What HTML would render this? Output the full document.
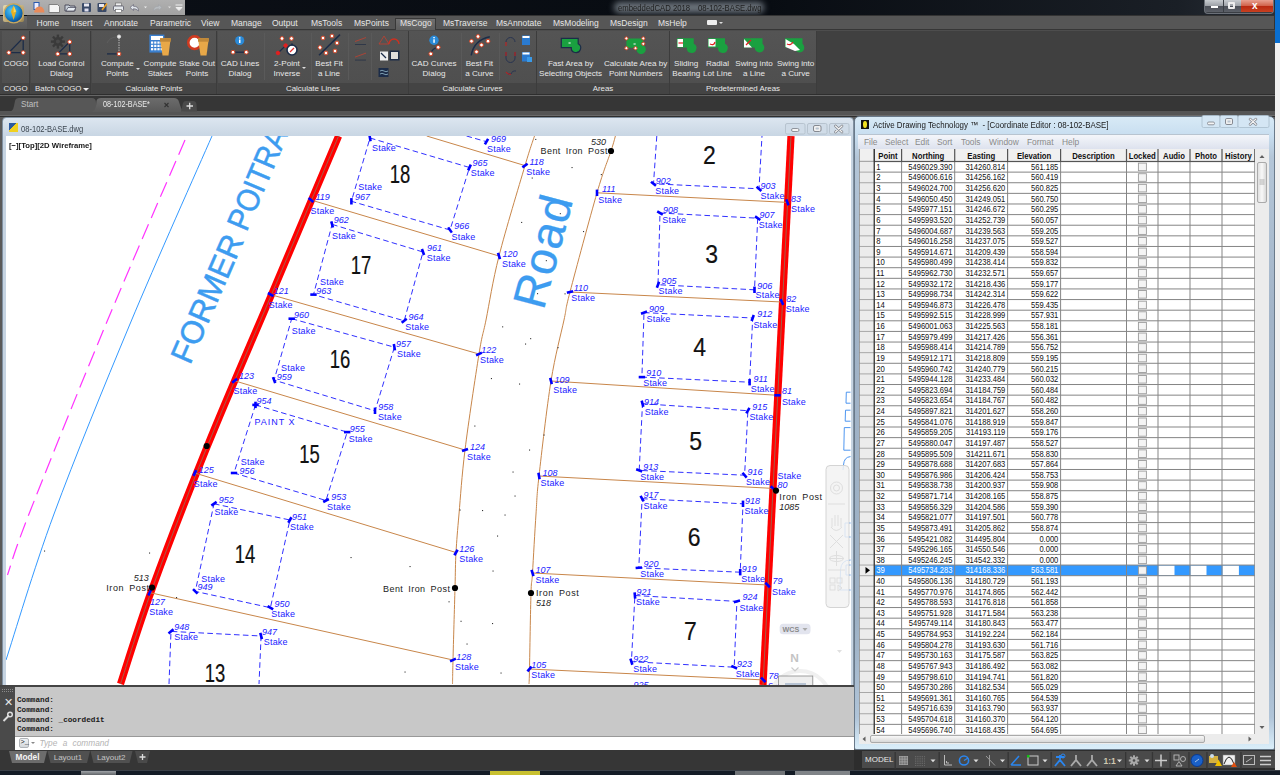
<!DOCTYPE html><html><head><meta charset="utf-8"><style>
*{margin:0;padding:0;box-sizing:border-box}
html,body{width:1280px;height:775px;overflow:hidden;background:#0a0e14;font-family:"Liberation Sans",sans-serif;position:relative}
.a{position:absolute}
.t{position:absolute;white-space:nowrap;line-height:1}
.tab{position:absolute;top:17px;height:12px;font-size:8.5px;color:#e6e6e6;line-height:12px;white-space:nowrap}
.lbl{position:absolute;font-size:8.1px;color:#e8e8e8;text-align:center;line-height:10px;white-space:nowrap}
.ptl{position:absolute;top:83px;height:11px;font-size:7.9px;color:#e8e8e8;text-align:center;line-height:11px;background:#444;white-space:nowrap}
.sep{position:absolute;top:33px;width:1px;height:48px;background:#3a3a3a;border-right:1px solid #555}

</style></head><body>
<div class="a" style="left:0;top:0;width:1280px;height:15px;background:linear-gradient(90deg,#0b0f16 0%,#080c12 60%,#1a1f26 92%,#2a3038 100%)"></div>
<div class="a" style="left:614px;top:2px;width:150px;height:11px;background:#6c747c;filter:blur(3px);border-radius:5px"></div>
<div class="t" style="left:618px;top:3.5px;font-size:8.3px;color:#1e1e1e;transform:scaleX(0.93);transform-origin:left">embeddedCAD 2018</div>
<div class="t" style="left:698px;top:3.5px;font-size:8.3px;color:#1e1e1e;transform:scaleX(0.93);transform-origin:left">08-102-BASE.dwg</div>
<div class="a" style="left:1204px;top:0;width:70px;height:14px;border:1px solid #6b7078;border-top:none;border-radius:0 0 4px 4px;background:#3a3e44"></div>
<div class="a" style="left:1205px;top:0;width:18px;height:12px;background:linear-gradient(#c8ccd0,#9ca0a6 50%,#4c5058 51%,#5c6068)"></div>
<div class="a" style="left:1211px;top:6px;width:7px;height:2px;background:#fff"></div>
<div class="a" style="left:1224px;top:0;width:17px;height:12px;background:linear-gradient(#c8ccd0,#9ca0a6 50%,#4c5058 51%,#5c6068)"></div>
<div class="a" style="left:1228px;top:2px;width:7px;height:7px;border:2px solid #eee;border-radius:1px"></div>
<div class="a" style="left:1241px;top:0;width:32px;height:12px;background:linear-gradient(#e8a090,#d06048 50%,#b82810 51%,#c84020)"></div>
<div class="t" style="left:1252px;top:1px;font-size:10px;font-weight:bold;color:#fff">x</div>
<div class="a" style="left:1275px;top:0;width:5px;height:43px;background:#0a6fd0"></div>
<div class="a" style="left:1275px;top:43px;width:5px;height:732px;background:#f0f0f0"></div>
<div class="a" style="left:0;top:0;width:185px;height:15px;background:linear-gradient(#b0b0b0,#a2a2a2)"></div>
<div class="a" style="left:0;top:16px;width:27px;height:11px;background:#6e6e6e"></div>
<svg class="a" style="left:0;top:0" width="190" height="16"><rect x="34" y="2.5" width="5" height="7" fill="#eef" stroke="#2a5ab0" stroke-width="1"/><path d="M34,12.5 Q35,6 40,6.5 Q44,7 44.5,12.5 Z" fill="#e88a5a"/><path d="M49,4.5 L57.5,4.5 L59.5,6.5 L59.5,12.5 L49,12.5 Z" fill="#f4f4f4" stroke="#777" stroke-width="0.9"/><path d="M65,5 L69,5 L70,6 L75,6 L75,11 L65,11 Z" fill="#c8d0d8" stroke="#445" stroke-width="0.9"/><path d="M66,11 L68,7.5 L76,7.5 L74,11 Z" fill="#e8eef4" stroke="#445" stroke-width="0.7"/><rect x="82" y="3" width="9" height="9" rx="1" fill="#3a4a68"/><rect x="84" y="3.5" width="5" height="3" fill="#e8e8f0"/><rect x="84.5" y="8.5" width="4" height="3" fill="#dde"/><rect x="97.5" y="3" width="9" height="9" rx="1" fill="#3a4a68"/><rect x="99" y="4" width="5" height="3" fill="#e8e8f0"/><path d="M102,10 L107,3.5" stroke="#f0a020" stroke-width="1.6"/><rect x="115.5" y="3" width="6" height="3" fill="#f0f0f0" stroke="#666" stroke-width="0.6"/><rect x="113.5" y="6" width="10" height="4.5" rx="1" fill="#e4e8ec" stroke="#556" stroke-width="0.8"/><rect x="115.5" y="9.5" width="6" height="3" fill="#fff" stroke="#666" stroke-width="0.6"/><path d="M130,7.5 L133.5,4.5 L133.5,6.3 Q138.5,6 138.5,11 Q136,8.5 133.5,8.7 L133.5,10.5 Z" fill="#dfe4ea" stroke="#667" stroke-width="0.7"/><path d="M144,6.5 L147,6.5 L145.5,8.2 Z" fill="#eee"/><path d="M162,7.5 L158.5,4.5 L158.5,6.3 Q153.5,6 153.5,11 Q156,8.5 158.5,8.7 L158.5,10.5 Z" fill="#b8bcc0" stroke="#a0a4a8" stroke-width="0.7"/><path d="M168,6.5 L171,6.5 L169.5,8.2 Z" fill="#ddd"/><path d="M175.5,5 L182.5,5 M176,7.5 L182,7.5 L179,10.5 Z" stroke="#eee" stroke-width="1" fill="#eee"/></svg>
<div class="a" style="left:0;top:16px;width:27px;height:13px;background:linear-gradient(#6a6a6a,#5a5a5a)"></div>
<svg class="a" style="left:0;top:0" width="30" height="30"><defs><radialGradient id="lg" cx="0.4" cy="0.35" r="0.7"><stop offset="0" stop-color="#58c8f4"/><stop offset="0.55" stop-color="#1a88d0"/><stop offset="1" stop-color="#0a3c80"/></radialGradient><linearGradient id="gg" x1="0" y1="0" x2="1" y2="1"><stop offset="0" stop-color="#e8dcb0"/><stop offset="1" stop-color="#9a8450"/></linearGradient></defs><rect x="3" y="5" width="21" height="17" rx="2" fill="url(#gg)"/><circle cx="13.7" cy="13.3" r="9.6" fill="url(#lg)" stroke="#c8a860" stroke-width="1.4"/><path d="M13.6,5.5 L16.2,11.5 L13.6,20 L11,11.5 Z" fill="#e8b020"/><path d="M13.6,5.5 L16.2,11.5 L13.6,12.5 Z" fill="#f8d860"/></svg>
<div class="a" style="left:27px;top:15px;width:1248px;height:15px;background:#333"></div>
<div class="a" style="left:27px;top:16px;width:1247px;height:13px;background:#565656"></div>
<div class="a" style="left:0;top:29px;width:1275px;height:1px;background:#363636"></div>
<div class="a" style="left:394.5px;top:18.3px;width:41px;height:12.5px;background:linear-gradient(#707070,#5c5c5c);border:1px solid #383838;border-bottom:none"></div>
<div class="tab" style="left:36.5px">Home</div>
<div class="tab" style="left:71px">Insert</div>
<div class="tab" style="left:104px">Annotate</div>
<div class="tab" style="left:150px">Parametric</div>
<div class="tab" style="left:201px">View</div>
<div class="tab" style="left:231px">Manage</div>
<div class="tab" style="left:272px">Output</div>
<div class="tab" style="left:311px">MsTools</div>
<div class="tab" style="left:354px">MsPoints</div>
<div class="tab" style="left:400px">MsCogo</div>
<div class="tab" style="left:443px">MsTraverse</div>
<div class="tab" style="left:496px">MsAnnotate</div>
<div class="tab" style="left:553px">MsModeling</div>
<div class="tab" style="left:610px">MsDesign</div>
<div class="tab" style="left:658px">MsHelp</div>
<div class="a" style="left:707px;top:20px;width:10px;height:5px;background:#eee;border-radius:1px"></div>
<div class="a" style="left:719px;top:22px;width:0;height:0;border-left:2px solid transparent;border-right:2px solid transparent;border-top:2px solid #ddd"></div>
<div class="a" style="left:0;top:30px;width:1275px;height:65px;background:linear-gradient(#4d4d4d,#454545)"></div>
<div class="a" style="left:0;top:94px;width:1275px;height:2px;background:#2a2a2a"></div>
<div class="a" style="left:2px;top:31px;width:28px;height:63px;background:linear-gradient(#545454,#4e4e4e);border-right:1px solid #3c3c3c"></div>
<div class="ptl" style="left:2px;width:27px">COGO</div>
<div class="a" style="left:31px;top:31px;width:60px;height:63px;background:linear-gradient(#545454,#4e4e4e);border-right:1px solid #3c3c3c"></div>
<div class="ptl" style="left:31px;width:59px;text-align:left;padding-left:4px">Batch COGO</div>
<div class="a" style="left:92px;top:31px;width:125px;height:63px;background:linear-gradient(#545454,#4e4e4e);border-right:1px solid #3c3c3c"></div>
<div class="ptl" style="left:92px;width:124px">Calculate Points</div>
<div class="a" style="left:218px;top:31px;width:191px;height:63px;background:linear-gradient(#545454,#4e4e4e);border-right:1px solid #3c3c3c"></div>
<div class="ptl" style="left:218px;width:190px">Calculate Lines</div>
<div class="a" style="left:409px;top:31px;width:128px;height:63px;background:linear-gradient(#545454,#4e4e4e);border-right:1px solid #3c3c3c"></div>
<div class="ptl" style="left:409px;width:127px">Calculate Curves</div>
<div class="a" style="left:537px;top:31px;width:133px;height:63px;background:linear-gradient(#545454,#4e4e4e);border-right:1px solid #3c3c3c"></div>
<div class="ptl" style="left:537px;width:132px">Areas</div>
<div class="a" style="left:670px;top:31px;width:147px;height:63px;background:linear-gradient(#545454,#4e4e4e);border-right:1px solid #3c3c3c"></div>
<div class="ptl" style="left:670px;width:146px">Predetermined Areas</div>
<div class="a" style="left:817px;top:31px;width:458px;height:63px;background:#404040"></div>
<div class="lbl" style="left:-24px;width:80px;top:58.6px">COGO</div>
<div class="lbl" style="left:21.4px;width:80px;top:58.6px">Load Control</div>
<div class="lbl" style="left:21.4px;width:80px;top:68.6px">Dialog</div>
<div class="lbl" style="left:77.4px;width:80px;top:58.6px">Compute</div>
<div class="lbl" style="left:77.4px;width:80px;top:68.6px">Points</div>
<div class="a" style="left:135.7px;top:67.6px;width:0;height:0;border-left:2px solid transparent;border-right:2px solid transparent;border-top:2.5px solid #ddd"></div>
<div class="lbl" style="left:120px;width:80px;top:58.6px">Compute</div>
<div class="lbl" style="left:120px;width:80px;top:68.6px">Stakes</div>
<div class="lbl" style="left:157.1px;width:80px;top:58.6px">Stake Out</div>
<div class="lbl" style="left:157.1px;width:80px;top:68.6px">Points</div>
<div class="lbl" style="left:200px;width:80px;top:58.6px">CAD Lines</div>
<div class="lbl" style="left:200px;width:80px;top:68.6px">Dialog</div>
<div class="lbl" style="left:246.89999999999998px;width:80px;top:58.6px">2-Point</div>
<div class="lbl" style="left:246.89999999999998px;width:80px;top:68.6px">Inverse</div>
<div class="a" style="left:301.7px;top:67px;width:0;height:0;border-left:2px solid transparent;border-right:2px solid transparent;border-top:2.5px solid #ddd"></div>
<div class="lbl" style="left:289px;width:80px;top:58.6px">Best Fit</div>
<div class="lbl" style="left:289px;width:80px;top:68.6px">a Line</div>
<div class="lbl" style="left:394px;width:80px;top:58.6px">CAD Curves</div>
<div class="lbl" style="left:394px;width:80px;top:68.6px">Dialog</div>
<div class="lbl" style="left:439.4px;width:80px;top:58.6px">Best Fit</div>
<div class="lbl" style="left:439.4px;width:80px;top:68.6px">a Curve</div>
<div class="lbl" style="left:530.6px;width:80px;top:58.6px">Fast Area by</div>
<div class="lbl" style="left:530.6px;width:80px;top:68.6px">Selecting Objects</div>
<div class="lbl" style="left:595.7px;width:80px;top:58.6px">Calculate Area by</div>
<div class="lbl" style="left:595.7px;width:80px;top:68.6px">Point Numbers</div>
<div class="lbl" style="left:646.2px;width:80px;top:58.6px">Sliding</div>
<div class="lbl" style="left:646.2px;width:80px;top:68.6px">Bearing</div>
<div class="lbl" style="left:677.5px;width:80px;top:58.6px">Radial</div>
<div class="lbl" style="left:677.5px;width:80px;top:68.6px">Lot Line</div>
<div class="lbl" style="left:714px;width:80px;top:58.6px">Swing into</div>
<div class="lbl" style="left:714px;width:80px;top:68.6px">a Line</div>
<div class="lbl" style="left:755.6px;width:80px;top:58.6px">Swing into</div>
<div class="lbl" style="left:755.6px;width:80px;top:68.6px">a Curve</div>
<div class="a" style="left:82.5px;top:87.5px;width:0;height:0;border-left:3px solid transparent;border-right:3px solid transparent;border-top:3px solid #eee"></div>
<div class="a" style="left:263.75px;top:33px;width:1px;height:47px;background:#5a5a5a"></div>
<div class="a" style="left:311px;top:33px;width:1px;height:47px;background:#5a5a5a"></div>
<div class="a" style="left:347.5px;top:33px;width:1px;height:47px;background:#5a5a5a"></div>
<div class="a" style="left:371.25px;top:33px;width:1px;height:47px;background:#5a5a5a"></div>
<div class="a" style="left:460.6px;top:33px;width:1px;height:47px;background:#5a5a5a"></div>
<div class="a" style="left:498.5px;top:33px;width:1px;height:47px;background:#5a5a5a"></div>
<svg class="a" style="left:0;top:0" width="830" height="96"><path d="M8.8,52.6 L23.2,52.6 L23.2,37.8 Z" fill="none" stroke="#1c2c48" stroke-width="1.3"/><circle cx="8.8" cy="52.6" r="1.9" fill="#fff" stroke="#d04020" stroke-width="1"/><circle cx="23.2" cy="52.6" r="1.9" fill="#fff" stroke="#d04020" stroke-width="1"/><circle cx="23.2" cy="37.8" r="1.9" fill="#fff" stroke="#d04020" stroke-width="1"/><g transform="translate(57.9 41.6)"><circle r="4.5" fill="#3a3a3a"/><circle r="2" fill="#4a4a4a"/><rect x="-1.2" y="-7" width="2.4" height="3" fill="#3a3a3a" transform="rotate(0)"/><rect x="-1.2" y="-7" width="2.4" height="3" fill="#3a3a3a" transform="rotate(45)"/><rect x="-1.2" y="-7" width="2.4" height="3" fill="#3a3a3a" transform="rotate(90)"/><rect x="-1.2" y="-7" width="2.4" height="3" fill="#3a3a3a" transform="rotate(135)"/><rect x="-1.2" y="-7" width="2.4" height="3" fill="#3a3a3a" transform="rotate(180)"/><rect x="-1.2" y="-7" width="2.4" height="3" fill="#3a3a3a" transform="rotate(225)"/><rect x="-1.2" y="-7" width="2.4" height="3" fill="#3a3a3a" transform="rotate(270)"/><rect x="-1.2" y="-7" width="2.4" height="3" fill="#3a3a3a" transform="rotate(315)"/></g><path d="M57.7,53.9 L69.7,53.9 L69.7,41.9 Z" fill="none" stroke="#1c2c48" stroke-width="1.3"/><circle cx="57.7" cy="53.9" r="1.9" fill="#fff" stroke="#d04020" stroke-width="1"/><circle cx="69.7" cy="53.9" r="1.9" fill="#fff" stroke="#d04020" stroke-width="1"/><circle cx="69.7" cy="41.9" r="1.9" fill="#fff" stroke="#d04020" stroke-width="1"/><path d="M119,37 L119,53" stroke="#bbb" stroke-width="1" stroke-dasharray="1.5 1"/><path d="M107,53.9 L119,53.9" stroke="#1c2c48" stroke-width="1.3"/><path d="M107,43 A11,11 0 0 1 116,37" fill="none" stroke="#666" stroke-width="0.6"/><circle cx="119" cy="36.6" r="1.6" fill="#eee" stroke="#ddd" stroke-width="1"/><circle cx="119" cy="53.9" r="1.9" fill="#fff" stroke="#d04020" stroke-width="1"/><rect x="149.4" y="34.6" width="15" height="18" fill="#3a80d0"/><rect x="151" y="36" width="12" height="4" fill="#fff"/><rect x="151.0" y="41.5" width="2.2" height="2.2" fill="#fff"/><rect x="151.0" y="44.8" width="2.2" height="2.2" fill="#fff"/><rect x="151.0" y="48.1" width="2.2" height="2.2" fill="#fff"/><rect x="154.2" y="41.5" width="2.2" height="2.2" fill="#fff"/><rect x="154.2" y="44.8" width="2.2" height="2.2" fill="#fff"/><rect x="154.2" y="48.1" width="2.2" height="2.2" fill="#fff"/><rect x="157.4" y="41.5" width="2.2" height="2.2" fill="#fff"/><rect x="157.4" y="44.8" width="2.2" height="2.2" fill="#fff"/><rect x="157.4" y="48.1" width="2.2" height="2.2" fill="#fff"/><rect x="160.6" y="41.5" width="2.2" height="2.2" fill="#fff"/><rect x="160.6" y="44.8" width="2.2" height="2.2" fill="#fff"/><rect x="160.6" y="48.1" width="2.2" height="2.2" fill="#fff"/><path d="M160,38.2 L170.7,38.2 L168.5,55.4 L162.5,55.4 Z" fill="#e8a848"/><rect x="160" y="38.2" width="10.7" height="3.5" fill="#c08838"/><circle cx="194.6" cy="42.7" r="6.3" fill="#fff" stroke="#d03a20" stroke-width="2.6"/><path d="M198,38.2 L208.8,38.2 L206.5,55.4 L200.5,55.4 Z" fill="#e8a848"/><rect x="198" y="38.2" width="10.8" height="3.5" fill="#c08838"/><circle cx="239.7" cy="40.5" r="4.6" fill="#2a8ad8"/><rect x="239" y="39.5" width="1.5" height="3.5" fill="#fff"/><rect x="239" y="37.3" width="1.5" height="1.3" fill="#fff"/><path d="M233,52.2 L246.3,52.2" stroke="#1c2c48" stroke-width="1.3"/><circle cx="233" cy="52.2" r="1.9" fill="#fff" stroke="#d04020" stroke-width="1"/><circle cx="246.3" cy="52.2" r="1.9" fill="#fff" stroke="#d04020" stroke-width="1"/><path d="M278,53 L285.6,45.6" stroke="#1c2c48" stroke-width="1.3"/><circle cx="282" cy="38.5" r="1.9" fill="#fff" stroke="#d04020" stroke-width="1"/><circle cx="291.5" cy="38.5" r="1.9" fill="#fff" stroke="#d04020" stroke-width="1"/><circle cx="278" cy="53" r="1.8" fill="#e02020" stroke="#e02020" stroke-width="1"/><circle cx="285.6" cy="45.6" r="1.8" fill="#e02020" stroke="#e02020" stroke-width="1"/><circle cx="292" cy="50" r="5" fill="#fff" stroke="#1c2c48" stroke-width="1.6"/><path d="M290,52 L294,48" stroke="#e03030" stroke-width="1.3"/><rect x="291" y="43.5" width="2" height="2" fill="#1c2c48"/><path d="M319,55.3 L340,34.6" stroke="#1c2c48" stroke-width="1.5"/><circle cx="323" cy="38" r="1.9" fill="#fff" stroke="#d04020" stroke-width="1"/><circle cx="332" cy="36" r="1.9" fill="#fff" stroke="#d04020" stroke-width="1"/><circle cx="337" cy="43" r="1.9" fill="#fff" stroke="#d04020" stroke-width="1"/><circle cx="320" cy="47.5" r="1.9" fill="#fff" stroke="#d04020" stroke-width="1"/><circle cx="326" cy="53" r="1.9" fill="#fff" stroke="#d04020" stroke-width="1"/><circle cx="335" cy="51" r="1.9" fill="#fff" stroke="#d04020" stroke-width="1"/><path d="M355,41.5 L366,37.5" stroke="#c04030" stroke-width="0.8"/><path d="M355,44.5 L366,44.5" stroke="#303848" stroke-width="1"/><path d="M355,57.1 L366,53.1" stroke="#c04030" stroke-width="0.8"/><path d="M355,60.1 L366,60.1" stroke="#303848" stroke-width="1"/><path d="M379,44 L384,36 L389,44 Z" fill="none" stroke="#c04030" stroke-width="0.8"/><path d="M389,44 A5,5 0 0 1 399,44" fill="none" stroke="#d03020" stroke-width="1.3"/><rect x="380" y="51.5" width="8" height="9" fill="#eee"/><path d="M381,53 L386,58" stroke="#1c2c48" stroke-width="1.2"/><rect x="389.5" y="50.5" width="10" height="10" fill="#1c2c48"/><rect x="391" y="52" width="7" height="7" fill="#ddd"/><rect x="378.5" y="68" width="10" height="9" fill="#1c2c48"/><path d="M380,71 q2,-1.5 4,0 t4,0 M380,74 q2,-1.5 4,0 t4,0" fill="none" stroke="#8ab" stroke-width="0.9"/><circle cx="434" cy="40.3" r="4.7" fill="#2a8ad8"/><rect x="433.3" y="39.3" width="1.5" height="3.5" fill="#fff"/><rect x="433.3" y="37" width="1.5" height="1.3" fill="#fff"/><path d="M430.8,53.8 Q432,48 438.2,47.3" fill="none" stroke="#1c2c48" stroke-width="1.3"/><circle cx="430.8" cy="53.8" r="1.9" fill="#fff" stroke="#d04020" stroke-width="1"/><circle cx="438.2" cy="47.3" r="1.9" fill="#fff" stroke="#d04020" stroke-width="1"/><path d="M471.2,55.4 Q474,40 489.8,36.8" fill="none" stroke="#1c2c48" stroke-width="1.5"/><circle cx="471.5" cy="41.2" r="1.9" fill="#fff" stroke="#d04020" stroke-width="1"/><circle cx="478" cy="36.5" r="1.9" fill="#fff" stroke="#d04020" stroke-width="1"/><circle cx="488" cy="41.2" r="1.9" fill="#fff" stroke="#d04020" stroke-width="1"/><circle cx="481.5" cy="45" r="1.9" fill="#fff" stroke="#d04020" stroke-width="1"/><circle cx="476.5" cy="51.8" r="1.9" fill="#fff" stroke="#d04020" stroke-width="1"/><path d="M506,42 A4.5,4.5 0 0 1 515,42 M506,52 L506,58 A4.5,4.5 0 0 0 515,58 L515,52 M506,72 A4.5,4.5 0 0 0 511,74 A4.5,4.5 0 0 1 516,71" fill="none" stroke="#283450" stroke-width="1"/><path d="M506,42 L506,46 M506,52 L506,56 M515,52 L515,56 M506,72 A4.5,4.5 0 0 0 511,74" fill="none" stroke="#c02020" stroke-width="1.1"/><rect x="522" y="35.5" width="8" height="9.5" fill="#2a7ad0"/><rect x="522.5" y="36" width="7" height="2" fill="#fff"/><rect x="522" y="52" width="8" height="9.5" fill="#2a7ad0"/><rect x="522.5" y="52.5" width="7" height="2" fill="#fff"/><rect x="527" y="57" width="5" height="5" fill="#3a9ae8"/><path d="M561.3,38.4 L578.2,38.4 L578.2,43.78 A4.7,4.7 0 1 1 571.27,47.7 L561.3,47.7 Z" fill="#1aa040" stroke="#1c2c48" stroke-width="1.2"/><rect x="568.5" y="42.5" width="2.2" height="1" fill="#fff"/><path d="M626.4,38.4 L643.3,38.4 L643.3,45.18 A4.7,4.7 0 1 1 636.77,47.7 L626.4,47.7 Z" fill="#1aa040" /><rect x="633.5" y="43.5" width="2.2" height="1" fill="#fff"/><circle cx="626.4" cy="38.4" r="1.6" fill="#fff" stroke="#d04020" stroke-width="1"/><circle cx="643.3" cy="38.4" r="1.6" fill="#fff" stroke="#d04020" stroke-width="1"/><circle cx="643.3" cy="43.8" r="1.6" fill="#fff" stroke="#d04020" stroke-width="1"/><circle cx="626.4" cy="48.2" r="1.6" fill="#fff" stroke="#d04020" stroke-width="1"/><circle cx="635.5" cy="48.2" r="1.6" fill="#fff" stroke="#d04020" stroke-width="1"/><path d="M676.9,38.25 L693.75,38.25 L693.75,43.87 A4.8,4.8 0 1 1 686.93,47.4 L676.9,47.4 Z" fill="#1aa040" /><path d="M708,38.25 L725,38.25 L725,43.87 A4.8,4.8 0 1 1 718.18,47.4 L708,47.4 Z" fill="#1aa040" /><path d="M743.75,38.25 L762.5,38.25 L762.5,43.87 A4.8,4.8 0 1 1 754.68,47.4 L743.75,47.4 Z" fill="#1aa040" /><path d="M785,38.25 L802.5,38.25 L802.5,43.87 A4.8,4.8 0 1 1 794.68,47.4 L785,47.4 Z" fill="#1aa040" /><rect x="677.5" y="39" width="5.5" height="8" fill="#fff"/><path d="M678.5,43 L683,43" stroke="#e02020" stroke-width="1.2"/><rect x="708.5" y="39" width="7" height="7.5" fill="#fff"/><path d="M710,44 Q714,46 715,42" fill="none" stroke="#e02020" stroke-width="1.2"/><path d="M744,39 L752,47.5 L744,47.5 Z" fill="#fff"/><path d="M746,45 L751,40" stroke="#e02020" stroke-width="1.3"/><path d="M785.5,39 L794,44 L800,50 L795,51 L785.5,47 Z" fill="#fff"/><path d="M787,44 Q791,46 793,42" fill="none" stroke="#e02020" stroke-width="1.2"/></svg>
<div class="a" style="left:0;top:94px;width:1275px;height:1px;background:#2e2e2e"></div>
<div class="a" style="left:0;top:95px;width:1275px;height:1px;background:#666"></div>
<div class="a" style="left:0;top:96px;width:1275px;height:20px;background:#363636"></div>
<div class="a" style="left:0;top:111px;width:1275px;height:3.5px;background:#555"></div>
<div class="a" style="left:0;top:114.5px;width:1275px;height:1px;background:#6a6a6a"></div>
<div class="a" style="left:0;top:115.5px;width:1275px;height:1.5px;background:#2e2e2e"></div>
<svg class="a" style="left:0;top:0" width="200" height="116"><defs><linearGradient id="gA" x1="0" y1="0" x2="0" y2="1"><stop offset="0" stop-color="#6c6c6c"/><stop offset="1" stop-color="#595959"/></linearGradient></defs><path d="M8,112 Q13,112 14,106 L15,101 Q15.5,98 19,98 L92,98 Q96,98 96,103 L96,108 Q96,111 99,112 Z" fill="#575757"/><path d="M90,112 Q95,112 96,106 L96.5,101 Q97,98 101,98 L174,98 Q178,98 179,102 L181,108 Q182,111 186,112 Z" fill="url(#gA)"/><path d="M181,111.5 L183,103 Q183.5,101 186,101 L193,101 Q196,101 196.5,104 L197,111.5 Z" fill="#4a4a4a"/><path d="M186.5,106 L193,106 M189.7,102.8 L189.7,109.2" stroke="#ddd" stroke-width="1.3"/><path d="M164.5,103 L168.5,107 M168.5,103 L164.5,107" stroke="#333" stroke-width="1.1"/></svg>
<div class="t" style="left:21px;top:101px;font-size:8.2px;color:#c0c0c0">Start</div>
<div class="t" style="left:103px;top:101px;font-size:8.2px;color:#eaeaea;transform:scaleX(0.88);transform-origin:left">08-102-BASE*</div>
<div class="a" style="left:0;top:117px;width:1275px;height:653px;background:#5a5a5a"></div>
<div class="a" style="left:2px;top:117px;width:852px;height:570px;background:linear-gradient(#dce6f0,#c6d4e2 20px,#c6d4e2);border:1px solid #8090a0;border-radius:4px 4px 0 0"></div>
<div class="t" style="left:21px;top:124.8px;font-size:8.8px;color:#3c4650;transform:scaleX(0.86);transform-origin:left">08-102-BASE.dwg</div>
<div class="a" style="left:9px;top:123px;width:9px;height:9px;background:linear-gradient(135deg,#2c5aa0 40%,#f0d020 41%)"></div>
<svg class="a" style="left:0;top:0" width="860" height="140"><rect x="785.5" y="123.5" width="19.5" height="10.5" rx="1.5" fill="#d0dce8" stroke="#b0bcc8" stroke-width="0.8"/><rect x="807.5" y="123.5" width="19.5" height="10.5" rx="1.5" fill="#d0dce8" stroke="#b0bcc8" stroke-width="0.8"/><rect x="829.5" y="123.5" width="19.5" height="10.5" rx="1.5" fill="#d0dce8" stroke="#b0bcc8" stroke-width="0.8"/><rect x="791.5" y="128.5" width="7.5" height="3" rx="1.5" fill="#f4f4f4" stroke="#7a7e86" stroke-width="0.8"/><rect x="813.5" y="125.5" width="7.5" height="6" rx="1.5" fill="#f0f0f0" stroke="#7a7e86" stroke-width="0.9"/><rect x="815.5" y="127.5" width="3.5" height="2" rx="1" fill="#b8c4d0"/><path d="M835.5,126 L842,132 M842,126 L835.5,132" stroke="#7a7e86" stroke-width="2.6" stroke-linecap="round"/><path d="M835.5,126 L842,132 M842,126 L835.5,132" stroke="#f4f4f4" stroke-width="1.3" stroke-linecap="round"/></svg>
<div class="a" style="left:6px;top:136px;width:845px;height:549px;background:#fff;overflow:hidden" id="dw">
<svg width="845" height="549" viewBox="6 136 845 549" style="position:absolute;left:0;top:0">
<path d="M338.6,136.0 C327.4,162.4 293.4,242.9 271.5,294.6 C249.6,346.3 227.2,397.2 207.4,446.0 C187.6,494.8 167.1,547.8 152.6,587.5 C138.1,627.2 125.8,667.9 120.5,684.0" fill="none" stroke="#ff0000" stroke-width="7.2"/>
<path d="M338.6,136.0 C327.4,162.4 293.4,242.9 271.5,294.6 C249.6,346.3 227.2,397.2 207.4,446.0 C187.6,494.8 167.1,547.8 152.6,587.5 C138.1,627.2 125.8,667.9 120.5,684.0" fill="none" stroke="#9a6a50" stroke-width="0.9"/>
<path d="M791.0,136.0 L763.0,685.0" fill="none" stroke="#ff0000" stroke-width="7.2"/>
<path d="M791.0,136.0 L763.0,685.0" fill="none" stroke="#9a6a50" stroke-width="0.9"/>
<path d="M212.0,136.0 C198.3,167.3 156.3,261.0 130.0,324.0 C103.7,387.0 74.7,458.0 54.0,514.0 C33.3,570.0 14.0,635.7 6.0,660.0" fill="none" stroke="#3399ff" stroke-width="1"/>
<path d="M185.0,140.0 C171.8,170.7 132.0,261.7 106.0,324.0 C80.0,386.3 45.4,472.2 29.0,514.0 C12.6,555.8 11.1,564.8 7.5,575.0" fill="none" stroke="#ff33ff" stroke-width="1.2" stroke-dasharray="16 7"/>
<path d="M534.5,136.0 C532.9,140.9 530.9,145.6 525.0,165.6 C519.1,185.6 505.5,230.3 499.0,256.0 C492.5,281.7 489.3,303.7 486.0,320.0 C482.7,336.3 482.5,332.3 479.0,354.0 C475.5,375.7 468.3,423.3 465.0,450.0 C461.7,476.7 460.5,496.9 459.0,514.0 C457.5,531.1 456.7,540.2 456.0,552.5 C455.3,564.8 455.5,570.1 455.0,588.0 C454.5,605.9 453.4,644.0 453.0,660.0 C452.6,676.0 452.6,680.0 452.5,684.0" fill="none" stroke="#c8864a" stroke-width="1"/>
<path d="M615.4,136.0 C614.7,138.5 614.1,141.5 611.0,151.0 C607.9,160.5 603.8,169.3 597.0,192.8 C590.2,216.3 575.5,270.8 570.0,292.0 C564.5,313.2 567.2,305.2 564.0,320.0 C560.8,334.8 555.2,355.0 551.0,381.0 C546.8,407.0 541.5,453.8 539.0,476.0 C536.5,498.2 537.1,497.8 536.0,514.0 C534.9,530.2 533.3,559.8 532.5,573.0 C531.7,586.2 531.5,577.0 531.0,593.0 C530.5,609.0 529.8,653.8 529.5,669.0 C529.2,684.2 529.1,681.5 529.0,684.0" fill="none" stroke="#c8864a" stroke-width="1"/>
<path d="M426.7,136.0 L525.0,165.6" stroke="#c8864a" stroke-width="1"/>
<path d="M311.0,200.0 L499.0,256.0" stroke="#c8864a" stroke-width="1"/>
<path d="M270.7,294.6 L479.0,354.0" stroke="#c8864a" stroke-width="1"/>
<path d="M234.6,380.8 L465.0,450.0" stroke="#c8864a" stroke-width="1"/>
<path d="M194.8,473.0 L456.0,552.5" stroke="#c8864a" stroke-width="1"/>
<path d="M149.7,592.6 L453.0,660.0" stroke="#c8864a" stroke-width="1"/>
<path d="M597.0,192.8 L787.4,202.4" stroke="#c8864a" stroke-width="1"/>
<path d="M570.0,292.0 L781.9,302.0" stroke="#c8864a" stroke-width="1"/>
<path d="M551.0,381.0 L777.5,395.3" stroke="#c8864a" stroke-width="1"/>
<path d="M539.0,476.0 L773.1,488.4" stroke="#c8864a" stroke-width="1"/>
<path d="M532.5,573.0 L767.6,585.0" stroke="#c8864a" stroke-width="1"/>
<path d="M529.5,669.0 L763.3,679.9" stroke="#c8864a" stroke-width="1"/>
<path d="M466.5,136.0 L486.5,141.7" fill="none" stroke="#3030ff" stroke-width="1" stroke-dasharray="5.6 3.3"/>
<path d="M370.0,138.0 L469.5,167.5 L450.0,230.0 L351.4,201.3 L370.0,138.0" fill="none" stroke="#3030ff" stroke-width="1" stroke-dasharray="5.6 3.3"/>
<path d="M332.1,224.4 L423.0,252.0 L404.2,320.8 L313.5,294.6 L332.1,224.4" fill="none" stroke="#3030ff" stroke-width="1" stroke-dasharray="5.6 3.3"/>
<path d="M291.7,318.7 L394.4,347.2 L375.0,410.8 L274.1,380.1 L291.7,318.7" fill="none" stroke="#3030ff" stroke-width="1" stroke-dasharray="5.6 3.3"/>
<path d="M255.5,404.9 L347.2,432.1 L326.0,500.5 L234.0,473.0 L255.5,404.9" fill="none" stroke="#3030ff" stroke-width="1" stroke-dasharray="5.6 3.3"/>
<path d="M214.0,503.8 L289.9,520.0 L270.4,607.7 L195.3,591.4 L214.0,503.8" fill="none" stroke="#3030ff" stroke-width="1" stroke-dasharray="5.6 3.3"/>
<path d="M169.0,684.0 L171.0,631.4 L261.1,636.0 L259.0,684.0" fill="none" stroke="#3030ff" stroke-width="1" stroke-dasharray="5.6 3.3"/>
<path d="M656.8,136.0 L653.5,183.8 L759.0,188.8 L762.0,136.0" fill="none" stroke="#3030ff" stroke-width="1" stroke-dasharray="5.6 3.3"/>
<path d="M660.0,213.0 L757.7,218.2 L754.5,289.8 L658.0,284.7 L660.0,213.0" fill="none" stroke="#3030ff" stroke-width="1" stroke-dasharray="5.6 3.3"/>
<path d="M644.0,312.6 L752.7,318.0 L749.6,382.2 L641.9,377.1 L644.0,312.6" fill="none" stroke="#3030ff" stroke-width="1" stroke-dasharray="5.6 3.3"/>
<path d="M642.5,403.7 L747.9,410.7 L744.6,475.2 L639.2,470.4 L642.5,403.7" fill="none" stroke="#3030ff" stroke-width="1" stroke-dasharray="5.6 3.3"/>
<path d="M642.1,498.7 L743.0,503.8 L740.2,572.2 L638.8,567.8 L642.1,498.7" fill="none" stroke="#3030ff" stroke-width="1" stroke-dasharray="5.6 3.3"/>
<path d="M634.9,595.5 L736.9,601.4 L734.2,667.2 L631.4,661.7 L634.9,595.5" fill="none" stroke="#3030ff" stroke-width="1" stroke-dasharray="5.6 3.3"/>
<rect x="523.7" y="162.4" width="2.6" height="6.4" fill="#0000ff" transform="rotate(-125 525 165.6)"/>
<rect x="309.7" y="196.8" width="2.6" height="6.4" fill="#0000ff" transform="rotate(-50 311 200)"/>
<rect x="497.7" y="252.8" width="2.6" height="6.4" fill="#0000ff" transform="rotate(-18 499 256)"/>
<rect x="269.4" y="291.40000000000003" width="2.6" height="6.4" fill="#0000ff" transform="rotate(-60 270.7 294.6)"/>
<rect x="477.7" y="350.8" width="2.6" height="6.4" fill="#0000ff" transform="rotate(-115 479 354)"/>
<rect x="233.29999999999998" y="377.6" width="2.6" height="6.4" fill="#0000ff" transform="rotate(-130 234.6 380.8)"/>
<rect x="463.7" y="446.8" width="2.6" height="6.4" fill="#0000ff" transform="rotate(-110 465 450)"/>
<rect x="193.5" y="469.8" width="2.6" height="6.4" fill="#0000ff" transform="rotate(-155 194.8 473)"/>
<rect x="454.7" y="549.3" width="2.6" height="6.4" fill="#0000ff" transform="rotate(-150 456 552.5)"/>
<rect x="148.39999999999998" y="589.4" width="2.6" height="6.4" fill="#0000ff" transform="rotate(-155 149.7 592.6)"/>
<rect x="451.7" y="656.8" width="2.6" height="6.4" fill="#0000ff" transform="rotate(-115 453 660)"/>
<rect x="595.7" y="189.60000000000002" width="2.6" height="6.4" fill="#0000ff" transform="rotate(0 597 192.8)"/>
<rect x="568.7" y="288.8" width="2.6" height="6.4" fill="#0000ff" transform="rotate(-105 570 292)"/>
<rect x="549.7" y="377.8" width="2.6" height="6.4" fill="#0000ff" transform="rotate(-15 551 381)"/>
<rect x="537.7" y="472.8" width="2.6" height="6.4" fill="#0000ff" transform="rotate(-10 539 476)"/>
<rect x="531.2" y="569.8" width="2.6" height="6.4" fill="#0000ff" transform="rotate(-18 532.5 573)"/>
<rect x="528.2" y="665.8" width="2.6" height="6.4" fill="#0000ff" transform="rotate(-140 529.5 669)"/>
<rect x="786.1" y="199.20000000000002" width="2.6" height="6.4" fill="#0000ff" transform="rotate(-20 787.4 202.4)"/>
<rect x="780.6" y="298.8" width="2.6" height="6.4" fill="#0000ff" transform="rotate(-25 781.9 302)"/>
<rect x="776.2" y="392.1" width="2.6" height="6.4" fill="#0000ff" transform="rotate(-90 777.5 395.3)"/>
<rect x="771.8000000000001" y="485.2" width="2.6" height="6.4" fill="#0000ff" transform="rotate(-50 773.1 488.4)"/>
<rect x="766.3000000000001" y="581.8" width="2.6" height="6.4" fill="#0000ff" transform="rotate(-45 767.6 585)"/>
<rect x="762.0" y="676.6999999999999" width="2.6" height="6.4" fill="#0000ff" transform="rotate(-45 763.3 679.9)"/>
<rect x="485.2" y="138.5" width="2.6" height="6.4" fill="#0000ff" transform="rotate(-150 486.5 141.7)"/>
<rect x="468.2" y="164.3" width="2.6" height="6.4" fill="#0000ff" transform="rotate(-155 469.5 167.5)"/>
<rect x="448.7" y="226.8" width="2.6" height="6.4" fill="#0000ff" transform="rotate(-35 450 230)"/>
<rect x="350.09999999999997" y="198.10000000000002" width="2.6" height="6.4" fill="#0000ff" transform="rotate(0 351.4 201.3)"/>
<rect x="368.7" y="134.8" width="2.6" height="6.4" fill="#0000ff" transform="rotate(-10 370 138)"/>
<rect x="330.8" y="221.20000000000002" width="2.6" height="6.4" fill="#0000ff" transform="rotate(-15 332.1 224.4)"/>
<rect x="421.7" y="248.8" width="2.6" height="6.4" fill="#0000ff" transform="rotate(-20 423 252)"/>
<rect x="402.9" y="317.6" width="2.6" height="6.4" fill="#0000ff" transform="rotate(-128 404.2 320.8)"/>
<rect x="312.2" y="291.40000000000003" width="2.6" height="6.4" fill="#0000ff" transform="rotate(-90 313.5 294.6)"/>
<rect x="290.4" y="315.5" width="2.6" height="6.4" fill="#0000ff" transform="rotate(-90 291.7 318.7)"/>
<rect x="393.09999999999997" y="344.0" width="2.6" height="6.4" fill="#0000ff" transform="rotate(-10 394.4 347.2)"/>
<rect x="373.7" y="407.6" width="2.6" height="6.4" fill="#0000ff" transform="rotate(0 375 410.8)"/>
<rect x="272.8" y="376.90000000000003" width="2.6" height="6.4" fill="#0000ff" transform="rotate(-20 274.1 380.1)"/>
<rect x="254.2" y="401.7" width="2.6" height="6.4" fill="#0000ff" transform="rotate(-90 255.5 404.9)"/>
<rect x="345.9" y="428.90000000000003" width="2.6" height="6.4" fill="#0000ff" transform="rotate(-90 347.2 432.1)"/>
<rect x="324.7" y="497.3" width="2.6" height="6.4" fill="#0000ff" transform="rotate(-118 326 500.5)"/>
<rect x="232.7" y="469.8" width="2.6" height="6.4" fill="#0000ff" transform="rotate(-90 234 473)"/>
<rect x="212.7" y="500.55" width="2.6" height="6.4" fill="#0000ff" transform="rotate(-125 214 503.75)"/>
<rect x="288.59999999999997" y="516.8" width="2.6" height="6.4" fill="#0000ff" transform="rotate(-150 289.9 520)"/>
<rect x="269.09999999999997" y="604.5" width="2.6" height="6.4" fill="#0000ff" transform="rotate(-60 270.4 607.7)"/>
<rect x="194.0" y="588.1999999999999" width="2.6" height="6.4" fill="#0000ff" transform="rotate(-45 195.3 591.4)"/>
<rect x="169.7" y="628.1999999999999" width="2.6" height="6.4" fill="#0000ff" transform="rotate(-130 171 631.4)"/>
<rect x="259.8" y="632.8" width="2.6" height="6.4" fill="#0000ff" transform="rotate(-15 261.1 636)"/>
<rect x="652.2" y="180.60000000000002" width="2.6" height="6.4" fill="#0000ff" transform="rotate(-50 653.5 183.8)"/>
<rect x="757.7" y="185.60000000000002" width="2.6" height="6.4" fill="#0000ff" transform="rotate(-48 759 188.8)"/>
<rect x="658.7" y="209.8" width="2.6" height="6.4" fill="#0000ff" transform="rotate(-60 660 213)"/>
<rect x="756.4000000000001" y="215.0" width="2.6" height="6.4" fill="#0000ff" transform="rotate(-55 757.7 218.2)"/>
<rect x="753.2" y="286.6" width="2.6" height="6.4" fill="#0000ff" transform="rotate(0 754.5 289.8)"/>
<rect x="656.7" y="281.5" width="2.6" height="6.4" fill="#0000ff" transform="rotate(-160 658 284.7)"/>
<rect x="642.7" y="309.40000000000003" width="2.6" height="6.4" fill="#0000ff" transform="rotate(-110 644 312.6)"/>
<rect x="751.4000000000001" y="314.8" width="2.6" height="6.4" fill="#0000ff" transform="rotate(-160 752.7 318)"/>
<rect x="748.3000000000001" y="379.0" width="2.6" height="6.4" fill="#0000ff" transform="rotate(0 749.6 382.2)"/>
<rect x="640.6" y="373.90000000000003" width="2.6" height="6.4" fill="#0000ff" transform="rotate(-90 641.9 377.1)"/>
<rect x="641.2" y="400.5" width="2.6" height="6.4" fill="#0000ff" transform="rotate(-15 642.5 403.7)"/>
<rect x="746.6" y="407.5" width="2.6" height="6.4" fill="#0000ff" transform="rotate(-150 747.9 410.7)"/>
<rect x="743.3000000000001" y="472.0" width="2.6" height="6.4" fill="#0000ff" transform="rotate(-40 744.6 475.2)"/>
<rect x="637.9000000000001" y="467.2" width="2.6" height="6.4" fill="#0000ff" transform="rotate(-70 639.2 470.4)"/>
<rect x="640.8000000000001" y="495.5" width="2.6" height="6.4" fill="#0000ff" transform="rotate(-30 642.1 498.7)"/>
<rect x="741.7" y="500.6" width="2.6" height="6.4" fill="#0000ff" transform="rotate(0 743 503.8)"/>
<rect x="738.9000000000001" y="569.0" width="2.6" height="6.4" fill="#0000ff" transform="rotate(0 740.2 572.2)"/>
<rect x="637.5" y="564.5999999999999" width="2.6" height="6.4" fill="#0000ff" transform="rotate(-95 638.8 567.8)"/>
<rect x="633.6" y="592.3" width="2.6" height="6.4" fill="#0000ff" transform="rotate(-5 634.9 595.5)"/>
<rect x="735.6" y="598.1999999999999" width="2.6" height="6.4" fill="#0000ff" transform="rotate(-105 736.9 601.4)"/>
<rect x="732.9000000000001" y="664.0" width="2.6" height="6.4" fill="#0000ff" transform="rotate(-65 734.2 667.2)"/>
<rect x="630.1" y="658.5" width="2.6" height="6.4" fill="#0000ff" transform="rotate(-18 631.4 661.7)"/>
<rect x="254.2" y="401.7" width="2.6" height="6.4" fill="#0000ff"/>
<text x="491" y="141.8" font-family="Liberation Sans" font-size="9" fill="#2222ff" font-style="italic">969</text>
<text x="487" y="151.8" font-family="Liberation Sans" font-size="9" fill="#2222ff" letter-spacing="0.2">Stake</text>
<text x="472.5" y="165.8" font-family="Liberation Sans" font-size="9" fill="#2222ff" font-style="italic">965</text>
<text x="470.75" y="176.3" font-family="Liberation Sans" font-size="9" fill="#2222ff" letter-spacing="0.2">Stake</text>
<text x="529.5" y="165.05" font-family="Liberation Sans" font-size="9" fill="#2222ff" font-style="italic">118</text>
<text x="526.25" y="175.05" font-family="Liberation Sans" font-size="9" fill="#2222ff" letter-spacing="0.2">Stake</text>
<text x="315.5" y="199.55" font-family="Liberation Sans" font-size="9" fill="#2222ff" font-style="italic">119</text>
<text x="310.5" y="214.05" font-family="Liberation Sans" font-size="9" fill="#2222ff" letter-spacing="0.2">Stake</text>
<text x="355" y="199.55" font-family="Liberation Sans" font-size="9" fill="#2222ff" font-style="italic">967</text>
<text x="358.25" y="190.3" font-family="Liberation Sans" font-size="9" fill="#2222ff" letter-spacing="0.2">Stake</text>
<text x="454.25" y="229.05" font-family="Liberation Sans" font-size="9" fill="#2222ff" font-style="italic">966</text>
<text x="451.5" y="239.55" font-family="Liberation Sans" font-size="9" fill="#2222ff" letter-spacing="0.2">Stake</text>
<text x="333.75" y="223.3" font-family="Liberation Sans" font-size="9" fill="#2222ff" font-style="italic">962</text>
<text x="332" y="238.8" font-family="Liberation Sans" font-size="9" fill="#2222ff" letter-spacing="0.2">Stake</text>
<text x="427" y="250.8" font-family="Liberation Sans" font-size="9" fill="#2222ff" font-style="italic">961</text>
<text x="426.75" y="261.3" font-family="Liberation Sans" font-size="9" fill="#2222ff" letter-spacing="0.2">Stake</text>
<text x="502.5" y="256.55" font-family="Liberation Sans" font-size="9" fill="#2222ff" font-style="italic">120</text>
<text x="502" y="267.05" font-family="Liberation Sans" font-size="9" fill="#2222ff" letter-spacing="0.2">Stake</text>
<text x="316.25" y="293.8" font-family="Liberation Sans" font-size="9" fill="#2222ff" font-style="italic">963</text>
<text x="320" y="285.05" font-family="Liberation Sans" font-size="9" fill="#2222ff" letter-spacing="0.2">Stake</text>
<text x="408.6" y="319.8" font-family="Liberation Sans" font-size="9" fill="#2222ff" font-style="italic">964</text>
<text x="405.3" y="330.1" font-family="Liberation Sans" font-size="9" fill="#2222ff" letter-spacing="0.2">Stake</text>
<text x="573.75" y="290.8" font-family="Liberation Sans" font-size="9" fill="#2222ff" font-style="italic">110</text>
<text x="571.25" y="300.8" font-family="Liberation Sans" font-size="9" fill="#2222ff" letter-spacing="0.2">Stake</text>
<text x="601.9" y="192.10000000000002" font-family="Liberation Sans" font-size="9" fill="#2222ff" font-style="italic">111</text>
<text x="598.2" y="202.9" font-family="Liberation Sans" font-size="9" fill="#2222ff" letter-spacing="0.2">Stake</text>
<text x="273.75" y="293.8" font-family="Liberation Sans" font-size="9" fill="#2222ff" font-style="italic">121</text>
<text x="268.75" y="307.55" font-family="Liberation Sans" font-size="9" fill="#2222ff" letter-spacing="0.2">Stake</text>
<text x="293.9" y="318.2" font-family="Liberation Sans" font-size="9" fill="#2222ff" font-style="italic">960</text>
<text x="291.7" y="333.6" font-family="Liberation Sans" font-size="9" fill="#2222ff" letter-spacing="0.2">Stake</text>
<text x="395.9" y="346.7" font-family="Liberation Sans" font-size="9" fill="#2222ff" font-style="italic">957</text>
<text x="397" y="357.1" font-family="Liberation Sans" font-size="9" fill="#2222ff" letter-spacing="0.2">Stake</text>
<text x="276.7" y="379.7" font-family="Liberation Sans" font-size="9" fill="#2222ff" font-style="italic">959</text>
<text x="281.1" y="370.90000000000003" font-family="Liberation Sans" font-size="9" fill="#2222ff" letter-spacing="0.2">Stake</text>
<text x="239" y="379.40000000000003" font-family="Liberation Sans" font-size="9" fill="#2222ff" font-style="italic">123</text>
<text x="233.5" y="393.90000000000003" font-family="Liberation Sans" font-size="9" fill="#2222ff" letter-spacing="0.2">Stake</text>
<text x="256.6" y="404.2" font-family="Liberation Sans" font-size="9" fill="#2222ff" font-style="italic">954</text>
<text x="378.3" y="410.2" font-family="Liberation Sans" font-size="9" fill="#2222ff" font-style="italic">958</text>
<text x="377.9" y="420.3" font-family="Liberation Sans" font-size="9" fill="#2222ff" letter-spacing="0.2">Stake</text>
<text x="349.8" y="431.7" font-family="Liberation Sans" font-size="9" fill="#2222ff" font-style="italic">955</text>
<text x="348.7" y="442.0" font-family="Liberation Sans" font-size="9" fill="#2222ff" letter-spacing="0.2">Stake</text>
<text x="239.5" y="473.8" font-family="Liberation Sans" font-size="9" fill="#2222ff" font-style="italic">956</text>
<text x="240.75" y="465.3" font-family="Liberation Sans" font-size="9" fill="#2222ff" letter-spacing="0.2">Stake</text>
<text x="198.75" y="472.8" font-family="Liberation Sans" font-size="9" fill="#2222ff" font-style="italic">125</text>
<text x="193.75" y="487.05" font-family="Liberation Sans" font-size="9" fill="#2222ff" letter-spacing="0.2">Stake</text>
<text x="218.75" y="502.8" font-family="Liberation Sans" font-size="9" fill="#2222ff" font-style="italic">952</text>
<text x="214.5" y="514.55" font-family="Liberation Sans" font-size="9" fill="#2222ff" letter-spacing="0.2">Stake</text>
<text x="292" y="519.55" font-family="Liberation Sans" font-size="9" fill="#2222ff" font-style="italic">951</text>
<text x="290" y="529.55" font-family="Liberation Sans" font-size="9" fill="#2222ff" letter-spacing="0.2">Stake</text>
<text x="197.5" y="590.05" font-family="Liberation Sans" font-size="9" fill="#2222ff" font-style="italic">949</text>
<text x="201.25" y="581.55" font-family="Liberation Sans" font-size="9" fill="#2222ff" letter-spacing="0.2">Stake</text>
<text x="274.5" y="606.55" font-family="Liberation Sans" font-size="9" fill="#2222ff" font-style="italic">950</text>
<text x="271.25" y="617.05" font-family="Liberation Sans" font-size="9" fill="#2222ff" letter-spacing="0.2">Stake</text>
<text x="150" y="604.55" font-family="Liberation Sans" font-size="9" fill="#2222ff" font-style="italic">127</text>
<text x="149.25" y="615.05" font-family="Liberation Sans" font-size="9" fill="#2222ff" letter-spacing="0.2">Stake</text>
<text x="174.25" y="630.3" font-family="Liberation Sans" font-size="9" fill="#2222ff" font-style="italic">948</text>
<text x="174.25" y="640.3" font-family="Liberation Sans" font-size="9" fill="#2222ff" letter-spacing="0.2">Stake</text>
<text x="262" y="634.55" font-family="Liberation Sans" font-size="9" fill="#2222ff" font-style="italic">947</text>
<text x="263.75" y="645.3" font-family="Liberation Sans" font-size="9" fill="#2222ff" letter-spacing="0.2">Stake</text>
<text x="481.25" y="353.3" font-family="Liberation Sans" font-size="9" fill="#2222ff" font-style="italic">122</text>
<text x="480" y="363.3" font-family="Liberation Sans" font-size="9" fill="#2222ff" letter-spacing="0.2">Stake</text>
<text x="554.5" y="382.8" font-family="Liberation Sans" font-size="9" fill="#2222ff" font-style="italic">109</text>
<text x="553.25" y="392.8" font-family="Liberation Sans" font-size="9" fill="#2222ff" letter-spacing="0.2">Stake</text>
<text x="470" y="450.3" font-family="Liberation Sans" font-size="9" fill="#2222ff" font-style="italic">124</text>
<text x="467" y="460.3" font-family="Liberation Sans" font-size="9" fill="#2222ff" letter-spacing="0.2">Stake</text>
<text x="542.5" y="475.8" font-family="Liberation Sans" font-size="9" fill="#2222ff" font-style="italic">108</text>
<text x="540.5" y="485.8" font-family="Liberation Sans" font-size="9" fill="#2222ff" letter-spacing="0.2">Stake</text>
<text x="331.25" y="500.3" font-family="Liberation Sans" font-size="9" fill="#2222ff" font-style="italic">953</text>
<text x="327" y="510.3" font-family="Liberation Sans" font-size="9" fill="#2222ff" letter-spacing="0.2">Stake</text>
<text x="459.25" y="552.05" font-family="Liberation Sans" font-size="9" fill="#2222ff" font-style="italic">126</text>
<text x="459.25" y="562.05" font-family="Liberation Sans" font-size="9" fill="#2222ff" letter-spacing="0.2">Stake</text>
<text x="535.5" y="572.55" font-family="Liberation Sans" font-size="9" fill="#2222ff" font-style="italic">107</text>
<text x="535.5" y="582.8" font-family="Liberation Sans" font-size="9" fill="#2222ff" letter-spacing="0.2">Stake</text>
<text x="456.25" y="659.55" font-family="Liberation Sans" font-size="9" fill="#2222ff" font-style="italic">128</text>
<text x="455" y="669.55" font-family="Liberation Sans" font-size="9" fill="#2222ff" letter-spacing="0.2">Stake</text>
<text x="531.25" y="667.55" font-family="Liberation Sans" font-size="9" fill="#2222ff" font-style="italic">105</text>
<text x="531.25" y="677.55" font-family="Liberation Sans" font-size="9" fill="#2222ff" letter-spacing="0.2">Stake</text>
<text x="655.7" y="184.20000000000002" font-family="Liberation Sans" font-size="9" fill="#2222ff" font-style="italic">902</text>
<text x="655.3" y="194.10000000000002" font-family="Liberation Sans" font-size="9" fill="#2222ff" letter-spacing="0.2">Stake</text>
<text x="760.4" y="189.3" font-family="Liberation Sans" font-size="9" fill="#2222ff" font-style="italic">903</text>
<text x="760.6" y="199.10000000000002" font-family="Liberation Sans" font-size="9" fill="#2222ff" letter-spacing="0.2">Stake</text>
<text x="791.1" y="202.0" font-family="Liberation Sans" font-size="9" fill="#2222ff" font-style="italic">83</text>
<text x="791.1" y="212.3" font-family="Liberation Sans" font-size="9" fill="#2222ff" letter-spacing="0.2">Stake</text>
<text x="663" y="213.0" font-family="Liberation Sans" font-size="9" fill="#2222ff" font-style="italic">908</text>
<text x="662.3" y="222.8" font-family="Liberation Sans" font-size="9" fill="#2222ff" letter-spacing="0.2">Stake</text>
<text x="759.5" y="217.8" font-family="Liberation Sans" font-size="9" fill="#2222ff" font-style="italic">907</text>
<text x="758.8" y="228.10000000000002" font-family="Liberation Sans" font-size="9" fill="#2222ff" letter-spacing="0.2">Stake</text>
<text x="661.6" y="284.3" font-family="Liberation Sans" font-size="9" fill="#2222ff" font-style="italic">905</text>
<text x="658.6" y="294.2" font-family="Liberation Sans" font-size="9" fill="#2222ff" letter-spacing="0.2">Stake</text>
<text x="757.3" y="289.1" font-family="Liberation Sans" font-size="9" fill="#2222ff" font-style="italic">906</text>
<text x="755.6" y="298.3" font-family="Liberation Sans" font-size="9" fill="#2222ff" letter-spacing="0.2">Stake</text>
<text x="786.3" y="301.6" font-family="Liberation Sans" font-size="9" fill="#2222ff" font-style="italic">82</text>
<text x="785.8" y="312.0" font-family="Liberation Sans" font-size="9" fill="#2222ff" letter-spacing="0.2">Stake</text>
<text x="649.1" y="312.40000000000003" font-family="Liberation Sans" font-size="9" fill="#2222ff" font-style="italic">909</text>
<text x="646.5" y="321.8" font-family="Liberation Sans" font-size="9" fill="#2222ff" letter-spacing="0.2">Stake</text>
<text x="757.3" y="317.40000000000003" font-family="Liberation Sans" font-size="9" fill="#2222ff" font-style="italic">912</text>
<text x="753.4" y="327.8" font-family="Liberation Sans" font-size="9" fill="#2222ff" letter-spacing="0.2">Stake</text>
<text x="646.3" y="376.0" font-family="Liberation Sans" font-size="9" fill="#2222ff" font-style="italic">910</text>
<text x="643.2" y="385.90000000000003" font-family="Liberation Sans" font-size="9" fill="#2222ff" letter-spacing="0.2">Stake</text>
<text x="753.4" y="381.5" font-family="Liberation Sans" font-size="9" fill="#2222ff" font-style="italic">911</text>
<text x="750.7" y="391.6" font-family="Liberation Sans" font-size="9" fill="#2222ff" letter-spacing="0.2">Stake</text>
<text x="781.9" y="394.3" font-family="Liberation Sans" font-size="9" fill="#2222ff" font-style="italic">81</text>
<text x="781.9" y="404.6" font-family="Liberation Sans" font-size="9" fill="#2222ff" letter-spacing="0.2">Stake</text>
<text x="644.1" y="404.8" font-family="Liberation Sans" font-size="9" fill="#2222ff" font-style="italic">914</text>
<text x="644.7" y="414.7" font-family="Liberation Sans" font-size="9" fill="#2222ff" letter-spacing="0.2">Stake</text>
<text x="752.3" y="409.6" font-family="Liberation Sans" font-size="9" fill="#2222ff" font-style="italic">915</text>
<text x="749.4" y="420.1" font-family="Liberation Sans" font-size="9" fill="#2222ff" letter-spacing="0.2">Stake</text>
<text x="643.2" y="469.8" font-family="Liberation Sans" font-size="9" fill="#2222ff" font-style="italic">913</text>
<text x="640.3" y="480.1" font-family="Liberation Sans" font-size="9" fill="#2222ff" letter-spacing="0.2">Stake</text>
<text x="747.4" y="474.8" font-family="Liberation Sans" font-size="9" fill="#2222ff" font-style="italic">916</text>
<text x="746.1" y="485.1" font-family="Liberation Sans" font-size="9" fill="#2222ff" letter-spacing="0.2">Stake</text>
<text x="777.5" y="488.0" font-family="Liberation Sans" font-size="9" fill="#2222ff" font-style="italic">80</text>
<text x="777.5" y="479.2" font-family="Liberation Sans" font-size="9" fill="#2222ff" letter-spacing="0.2">Stake</text>
<text x="643.6" y="498.3" font-family="Liberation Sans" font-size="9" fill="#2222ff" font-style="italic">917</text>
<text x="643.6" y="508.6" font-family="Liberation Sans" font-size="9" fill="#2222ff" letter-spacing="0.2">Stake</text>
<text x="745" y="503.8" font-family="Liberation Sans" font-size="9" fill="#2222ff" font-style="italic">918</text>
<text x="744.6" y="513.6" font-family="Liberation Sans" font-size="9" fill="#2222ff" letter-spacing="0.2">Stake</text>
<text x="643.6" y="566.8" font-family="Liberation Sans" font-size="9" fill="#2222ff" font-style="italic">920</text>
<text x="640.3" y="576.8" font-family="Liberation Sans" font-size="9" fill="#2222ff" letter-spacing="0.2">Stake</text>
<text x="741.7" y="571.8" font-family="Liberation Sans" font-size="9" fill="#2222ff" font-style="italic">919</text>
<text x="741.3" y="581.6999999999999" font-family="Liberation Sans" font-size="9" fill="#2222ff" letter-spacing="0.2">Stake</text>
<text x="772.4" y="584.3" font-family="Liberation Sans" font-size="9" fill="#2222ff" font-style="italic">79</text>
<text x="772" y="594.8" font-family="Liberation Sans" font-size="9" fill="#2222ff" letter-spacing="0.2">Stake</text>
<text x="636.6" y="594.8" font-family="Liberation Sans" font-size="9" fill="#2222ff" font-style="italic">921</text>
<text x="636" y="605.1999999999999" font-family="Liberation Sans" font-size="9" fill="#2222ff" letter-spacing="0.2">Stake</text>
<text x="742.4" y="600.3" font-family="Liberation Sans" font-size="9" fill="#2222ff" font-style="italic">924</text>
<text x="739.5" y="610.5999999999999" font-family="Liberation Sans" font-size="9" fill="#2222ff" letter-spacing="0.2">Stake</text>
<text x="633.2" y="661.6999999999999" font-family="Liberation Sans" font-size="9" fill="#2222ff" font-style="italic">922</text>
<text x="633.2" y="671.5999999999999" font-family="Liberation Sans" font-size="9" fill="#2222ff" letter-spacing="0.2">Stake</text>
<text x="737.1" y="666.5999999999999" font-family="Liberation Sans" font-size="9" fill="#2222ff" font-style="italic">923</text>
<text x="735.8" y="676.5999999999999" font-family="Liberation Sans" font-size="9" fill="#2222ff" letter-spacing="0.2">Stake</text>
<text x="768.6" y="678.8" font-family="Liberation Sans" font-size="9" fill="#2222ff" font-style="italic">78</text>
<text x="768" y="689.3" font-family="Liberation Sans" font-size="9" fill="#2222ff" letter-spacing="0.2">Stake</text>
<text x="372" y="150.9" font-family="Liberation Sans" font-size="9" fill="#2222ff" letter-spacing="0.2">Stake</text>
<text x="254.4" y="425" font-family="Liberation Sans" font-size="9" fill="#2222ff" letter-spacing="1">PAINT X</text>
<text x="0" y="0" font-family="Liberation Sans" font-size="25" fill="#111" stroke="#111" stroke-width="0.2" text-anchor="middle" transform="translate(400 183) scale(0.74 1)">18</text>
<text x="0" y="0" font-family="Liberation Sans" font-size="25" fill="#111" stroke="#111" stroke-width="0.2" text-anchor="middle" transform="translate(361 274) scale(0.74 1)">17</text>
<text x="0" y="0" font-family="Liberation Sans" font-size="25" fill="#111" stroke="#111" stroke-width="0.2" text-anchor="middle" transform="translate(340 367.5) scale(0.74 1)">16</text>
<text x="0" y="0" font-family="Liberation Sans" font-size="25" fill="#111" stroke="#111" stroke-width="0.2" text-anchor="middle" transform="translate(309.5 462.5) scale(0.74 1)">15</text>
<text x="0" y="0" font-family="Liberation Sans" font-size="25" fill="#111" stroke="#111" stroke-width="0.2" text-anchor="middle" transform="translate(245 563) scale(0.74 1)">14</text>
<text x="0" y="0" font-family="Liberation Sans" font-size="25" fill="#111" stroke="#111" stroke-width="0.2" text-anchor="middle" transform="translate(215 681.5) scale(0.74 1)">13</text>
<text x="0" y="0" font-family="Liberation Sans" font-size="25" fill="#111" stroke="#111" stroke-width="0.2" text-anchor="middle" transform="translate(709.5 164) scale(0.92 1)">2</text>
<text x="0" y="0" font-family="Liberation Sans" font-size="25" fill="#111" stroke="#111" stroke-width="0.2" text-anchor="middle" transform="translate(711.7 263) scale(0.92 1)">3</text>
<text x="0" y="0" font-family="Liberation Sans" font-size="25" fill="#111" stroke="#111" stroke-width="0.2" text-anchor="middle" transform="translate(699.6 356) scale(0.92 1)">4</text>
<text x="0" y="0" font-family="Liberation Sans" font-size="25" fill="#111" stroke="#111" stroke-width="0.2" text-anchor="middle" transform="translate(695.6 450.4) scale(0.92 1)">5</text>
<text x="0" y="0" font-family="Liberation Sans" font-size="25" fill="#111" stroke="#111" stroke-width="0.2" text-anchor="middle" transform="translate(694.1 545.7) scale(0.92 1)">6</text>
<text x="0" y="0" font-family="Liberation Sans" font-size="25" fill="#111" stroke="#111" stroke-width="0.2" text-anchor="middle" transform="translate(690.5 640.1) scale(0.92 1)">7</text>
<rect x="502.1" y="326.3" width="1.1" height="1.1" fill="#333"/>
<rect x="530.1" y="338.1" width="1.1" height="1.1" fill="#333"/>
<rect x="525.0" y="343.5" width="1.1" height="1.1" fill="#333"/>
<rect x="490.9" y="378.0" width="1.1" height="1.1" fill="#333"/>
<rect x="519.0" y="383.5" width="1.1" height="1.1" fill="#333"/>
<rect x="474.3" y="425.5" width="1.1" height="1.1" fill="#333"/>
<rect x="529.0" y="449.5" width="1.1" height="1.1" fill="#333"/>
<rect x="557.5" y="347.1" width="1.1" height="1.1" fill="#333"/>
<rect x="543.5" y="434.5" width="1.1" height="1.1" fill="#333"/>
<rect x="521.1" y="221.9" width="1.1" height="1.1" fill="#333"/>
<rect x="559.8" y="213.1" width="1.1" height="1.1" fill="#333"/>
<rect x="583.0" y="231.0" width="1.1" height="1.1" fill="#333"/>
<rect x="545.8" y="260.1" width="1.1" height="1.1" fill="#333"/>
<rect x="537.0" y="293.1" width="1.1" height="1.1" fill="#333"/>
<rect x="564.5" y="293.3" width="1.1" height="1.1" fill="#333"/>
<rect x="350.5" y="557.0" width="1.1" height="1.1" fill="#333"/>
<rect x="409.5" y="566.0" width="1.1" height="1.1" fill="#333"/>
<rect x="497.0" y="535.5" width="1.1" height="1.1" fill="#333"/>
<rect x="459.5" y="509.5" width="1.1" height="1.1" fill="#333"/>
<rect x="482.0" y="510.0" width="1.1" height="1.1" fill="#333"/>
<rect x="504.5" y="514.5" width="1.1" height="1.1" fill="#333"/>
<rect x="492.5" y="570.5" width="1.1" height="1.1" fill="#333"/>
<rect x="448.5" y="601.25" width="1.1" height="1.1" fill="#333"/>
<rect x="460.5" y="620.75" width="1.1" height="1.1" fill="#333"/>
<rect x="492.0" y="623.0" width="1.1" height="1.1" fill="#333"/>
<rect x="466.5" y="643.5" width="1.1" height="1.1" fill="#333"/>
<rect x="500.5" y="672.5" width="1.1" height="1.1" fill="#333"/>
<rect x="404.5" y="671.5" width="1.1" height="1.1" fill="#333"/>
<rect x="44.0" y="550.5" width="1.1" height="1.1" fill="#333"/>
<rect x="149.0" y="552.5" width="1.1" height="1.1" fill="#333"/>
<rect x="176.0" y="597.0" width="1.1" height="1.1" fill="#333"/>
<rect x="535.2" y="138.9" width="1.1" height="1.1" fill="#333"/>
<rect x="571.5" y="167.0" width="1.1" height="1.1" fill="#333"/>
<rect x="600.8" y="174.0" width="1.1" height="1.1" fill="#333"/>
<rect x="531.7" y="177.5" width="1.1" height="1.1" fill="#333"/>
<rect x="512.5" y="471.5" width="1.1" height="1.1" fill="#333"/>
<rect x="514.5" y="495.5" width="1.1" height="1.1" fill="#333"/>
<text x="633.6" y="688" font-family="Liberation Sans" font-size="9" fill="#2222ff" font-style="italic">925</text>
<circle cx="611" cy="151" r="3.1" fill="#000"/>
<circle cx="206.7" cy="446" r="3.1" fill="#000"/>
<circle cx="152" cy="587.5" r="3.1" fill="#000"/>
<circle cx="455" cy="588" r="3.1" fill="#000"/>
<circle cx="531" cy="593" r="3.1" fill="#000"/>
<circle cx="776" cy="490.6" r="3.1" fill="#000"/>
<text x="591" y="145.3" font-family="Liberation Sans" font-size="9" fill="#222" font-style="italic">530</text>
<text x="540.5" y="154.3" font-family="Liberation Sans" font-size="9" fill="#222" letter-spacing="0.45" word-spacing="2">Bent Iron Post</text>
<text x="133.7" y="580.8" font-family="Liberation Sans" font-size="9" fill="#222" font-style="italic">513</text>
<text x="106.2" y="590.8" font-family="Liberation Sans" font-size="9" fill="#222" letter-spacing="0.6" word-spacing="2">Iron Post</text>
<text x="383" y="592.3" font-family="Liberation Sans" font-size="9" fill="#222" letter-spacing="0.45" word-spacing="2">Bent Iron Post</text>
<text x="536" y="596.3" font-family="Liberation Sans" font-size="9" fill="#222" letter-spacing="0.6" word-spacing="2">Iron Post</text>
<text x="536" y="605.8" font-family="Liberation Sans" font-size="9" fill="#222" font-style="italic">518</text>
<text x="779.3" y="500" font-family="Liberation Sans" font-size="9" fill="#222" letter-spacing="0.6" word-spacing="2">Iron Post</text>
<text x="779.3" y="509.9" font-family="Liberation Sans" font-size="9" fill="#222" font-style="italic">1085</text>
<text x="0" y="0" font-family="Liberation Sans" font-size="32" fill="#3d9cf0" stroke="#3d9cf0" stroke-width="0.5" transform="translate(190 365.5) rotate(-66.5) scale(0.985 1)">FORMER</text>
<text x="0" y="0" font-family="Liberation Sans" font-size="32" fill="#3d9cf0" stroke="#3d9cf0" stroke-width="0.5" transform="translate(246.5 232.5) rotate(-67) scale(0.9 1)">POITRAS</text>
<text x="0" y="0" font-family="Liberation Sans" font-size="46.5" fill="#3d9cf0" stroke="#3d9cf0" stroke-width="0.3" letter-spacing="1.2" transform="translate(543.5 311) rotate(-75)">Road</text>
<path d="M850.5,392.2 L846.3,392.2 L846,403.2 L850.5,403.2" fill="none" stroke="#3a8aee" stroke-width="0.9"/>
<path d="M850.5,410.2 L845.5,410.2 L845.2,421.2 L850.5,421.2" fill="none" stroke="#3a8aee" stroke-width="0.9"/>
<path d="M850.5,427.6 L844.3,427.6 L843.8,450.2 L850.5,450.2" fill="none" stroke="#3a8aee" stroke-width="0.9"/>
<path d="M850.5,456.6 Q844,457 843.5,465 L843,470" fill="none" stroke="#3a8aee" stroke-width="0.9"/>
<path d="M850.5,523 L845,523 L845,537 L850.5,537" fill="none" stroke="#3a8aee" stroke-width="0.9"/>
<path d="M850.5,560 Q841,560 840.5,570 L840,590 L850.5,590" fill="none" stroke="#3a8aee" stroke-width="0.9"/>
<path d="M850.5,565 L846,565 L846,575 L850.5,575" fill="none" stroke="#3a8aee" stroke-width="0.9"/>
<rect x="826" y="465.5" width="23" height="142" rx="4" fill="#f2f2f2" fill-opacity="0.85" stroke="#d4d4d4"/>
<g fill="none" stroke="#dedede" stroke-width="1"><circle cx="836.5" cy="488" r="6"/><circle cx="836.5" cy="488" r="3"/><path d="M832,527 L832,518 M835,526 L835,515 M838,526 L838,515 M841,527 L841,518 M831,527 Q836,534 842,527"/><path d="M830,535 L843,548 M843,535 L830,548"/><path d="M836.5,551 L836.5,566 M829,558.5 L844,558.5"/><ellipse cx="836.5" cy="558.5" rx="7" ry="3"/><rect x="830" y="578" width="5" height="5"/><rect x="837" y="578" width="5" height="5"/><rect x="830" y="585" width="5" height="5"/><path d="M838,585 L842,588 L838,591 Z"/><path d="M828,504 L845,504 M828,570 L845,570"/></g>
<rect x="779.7" y="623.8" width="30.8" height="10.5" rx="3.5" fill="#e2e4ee"/>
<text x="782.5" y="632" font-family="Liberation Sans" font-weight="bold" font-size="7.2" fill="#8a8a8a">WCS</text>
<path d="M802.5,628 L807.5,628 L805,631 Z" fill="#aaa"/>
<circle cx="800" cy="702" r="31" fill="none" stroke="#f0f0f0" stroke-width="4"/>
<text x="790.3" y="661.7" font-family="Liberation Sans" font-weight="bold" font-size="14" fill="#c4c4c4" transform="translate(790.3 661.7) scale(0.85 0.8) translate(-790.3 -661.7)">N</text>
<path d="M791.5,667.5 L795,671 L798.5,667.5" fill="none" stroke="#ccc" stroke-width="1.2"/>
<path d="M837,650 L842,650 L839.5,653 Z" fill="#e0e0e0"/>
<rect x="778.6" y="676" width="34.2" height="10" fill="#eeeeee" stroke="#888" stroke-width="0.8"/>
<rect x="785" y="683" width="21" height="2" fill="#b8c4d4"/>
</svg>
</div>
<div class="t" style="left:9px;top:141.5px;font-size:7.9px;font-weight:bold;color:#161616;transform:scaleX(0.975);transform-origin:left">[&minus;][Top][2D Wireframe]</div>
<div class="a" style="left:0;top:685px;width:854px;height:2px;background:#444"></div>
<div class="a" style="left:0;top:687px;width:854px;height:63px;background:#c8c8c8"></div>
<div class="a" style="left:0;top:687px;width:15px;height:63px;background:#4a4a4a"></div>
<div class="t" style="left:3.5px;top:697px;font-size:11px;color:#e8e8e8">✕</div>
<svg class="a" style="left:0;top:687px" width="16" height="40"><g fill="#8a8a8a"><rect x="2" y="2" width="1" height="1"/><rect x="2" y="4" width="1" height="1"/><rect x="4" y="2" width="1" height="1"/><rect x="4" y="4" width="1" height="1"/><rect x="6" y="2" width="1" height="1"/><rect x="6" y="4" width="1" height="1"/><rect x="8" y="2" width="1" height="1"/><rect x="8" y="4" width="1" height="1"/><rect x="10" y="2" width="1" height="1"/><rect x="10" y="4" width="1" height="1"/><rect x="12" y="2" width="1" height="1"/><rect x="12" y="4" width="1" height="1"/></g><path d="M3.5,34 L9,28.5" stroke="#ddd" stroke-width="2"/><circle cx="10" cy="27.5" r="2.3" fill="none" stroke="#ddd" stroke-width="1.5"/></svg>
<div class="t" style="left:17px;top:696.8px;font-family:&quot;Liberation Mono&quot;,monospace;font-weight:bold;font-size:7.7px;color:#1a1a1a">Command:</div>
<div class="t" style="left:17px;top:706.65px;font-family:&quot;Liberation Mono&quot;,monospace;font-weight:bold;font-size:7.7px;color:#1a1a1a">Command:</div>
<div class="t" style="left:17px;top:716.5px;font-family:&quot;Liberation Mono&quot;,monospace;font-weight:bold;font-size:7.7px;color:#1a1a1a">Command: _coordedit</div>
<div class="t" style="left:17px;top:726.3499999999999px;font-family:&quot;Liberation Mono&quot;,monospace;font-weight:bold;font-size:7.7px;color:#1a1a1a">Command:</div>
<div class="a" style="left:15px;top:735.5px;width:839px;height:14.5px;background:#fff;border-top:1px solid #999"></div>
<div class="a" style="left:19px;top:738px;width:10px;height:9.5px;background:linear-gradient(#f0f2f4,#d4d8dc);border:1px solid #b0b4b8;border-radius:2px"></div>
<div class="t" style="left:20.5px;top:739px;font-size:7px;color:#222;font-family:&quot;Liberation Mono&quot;,monospace">&gt;_</div>
<div class="a" style="left:31px;top:742px;width:0;height:0;border-left:2px solid transparent;border-right:2px solid transparent;border-top:2.5px solid #888"></div>
<div class="t" style="left:39.5px;top:739px;font-style:italic;font-size:8.3px;color:#b4b4b4;word-spacing:3px">Type a command</div>
<div class="a" style="left:0;top:750px;width:854px;height:20px;background:#363636"></div>
<svg class="a" style="left:0;top:0" width="160" height="775"><path d="M9,751 L47,751 L44,763 L12,763 Z" fill="#6c6c6c"/><path d="M47.5,751 L90,751 L87,763 L50.5,763 Z" fill="#505050"/><path d="M90.5,751 L132.5,751 L129.5,763 L93.5,763 Z" fill="#505050"/><path d="M135,751 L150,751 L147,763 L138,763 Z" fill="#4a4a4a"/><text x="15.5" y="760" font-family="Liberation Sans" font-weight="bold" font-size="8.3" fill="#f4f4f4">Model</text><text x="53.7" y="760" font-family="Liberation Sans" font-size="8" fill="#c4c4c4">Layout1</text><text x="96.9" y="760" font-family="Liberation Sans" font-size="8" fill="#c4c4c4">Layout2</text><path d="M139.5,757 L145.5,757 M142.5,754 L142.5,760" stroke="#ddd" stroke-width="1.3"/></svg>
<div class="a" style="left:0;top:770px;width:1280px;height:5px;background:#141c26;border-top:1px solid #3a4048"></div>
<div class="a" style="left:81px;top:771px;width:35px;height:4px;background:linear-gradient(#a0a4a8,#606468)"></div>
<div class="a" style="left:490px;top:771px;width:50px;height:4px;background:#c8c030"></div>
<div class="a" style="left:735px;top:771px;width:50px;height:4px;background:#707478"></div>
<div class="a" style="left:795px;top:771px;width:55px;height:4px;background:#808488"></div>
<div class="a" style="left:854px;top:116px;width:421px;height:634px;background:linear-gradient(#d8eaf6,#c8def0 18px,#b4c6d8 40px,#a2b4c8 200px,#9cb0c4 500px,#b0c4d8 600px,#d8ecf8 630px);border:1px solid #6a7a8a;border-radius:5px 5px 2px 2px"></div>
<div class="a" style="left:861px;top:120px;width:8px;height:9px;background:#111"></div>
<div class="a" style="left:863px;top:121px;width:4px;height:7px;background:#f0e020;border-radius:40% 40% 50% 50%"></div>
<div class="t" style="left:873px;top:120.8px;font-size:8.3px;color:#1a1a1a;transform:scaleX(0.955);transform-origin:left">Active Drawing Technology &trade;&nbsp; - [Coordinate Editor : 08-102-BASE]</div>
<svg class="a" style="left:0;top:0" width="1280" height="130"><rect x="1202" y="115.5" width="18" height="12" rx="1.5" fill="#d4e6f4" stroke="#a8bccc" stroke-width="0.8"/><rect x="1220" y="115.5" width="18" height="12" rx="1.5" fill="#d4e6f4" stroke="#a8bccc" stroke-width="0.8"/><rect x="1238" y="115.5" width="31" height="12" rx="1.5" fill="#d4e6f4" stroke="#a8bccc" stroke-width="0.8"/><rect x="1207.5" y="122" width="7" height="2.8" rx="1.3" fill="#f4f4f4" stroke="#7a7e86" stroke-width="0.8"/><rect x="1225.5" y="118.5" width="7" height="6" rx="1.3" fill="#f0f0f0" stroke="#7a7e86" stroke-width="0.9"/><rect x="1227.5" y="120.5" width="3" height="2" fill="#b8c4d0"/><path d="M1250,119 L1256,124.5 M1256,119 L1250,124.5" stroke="#7a7e86" stroke-width="2.5" stroke-linecap="round"/><path d="M1250,119 L1256,124.5 M1256,119 L1250,124.5" stroke="#f4f4f4" stroke-width="1.2" stroke-linecap="round"/></svg>
<div class="a" style="left:858px;top:134px;width:411px;height:15px;background:linear-gradient(#f4f6fa,#dde2ee);border-top:1px solid #b8c4d0"></div>
<div class="t" style="left:864px;top:137.5px;font-size:8.4px;color:#8a8a8a">File</div>
<div class="t" style="left:885px;top:137.5px;font-size:8.4px;color:#8a8a8a">Select</div>
<div class="t" style="left:915px;top:137.5px;font-size:8.4px;color:#8a8a8a">Edit</div>
<div class="t" style="left:937px;top:137.5px;font-size:8.4px;color:#8a8a8a">Sort</div>
<div class="t" style="left:961px;top:137.5px;font-size:8.4px;color:#8a8a8a">Tools</div>
<div class="t" style="left:989px;top:137.5px;font-size:8.4px;color:#8a8a8a">Window</div>
<div class="t" style="left:1027px;top:137.5px;font-size:8.4px;color:#8a8a8a">Format</div>
<div class="t" style="left:1062px;top:137.5px;font-size:8.4px;color:#8a8a8a">Help</div>
<svg class="a" style="left:0;top:0" width="1280" height="775"><rect x="859" y="149" width="410" height="585" fill="#fff"/><rect x="859.6" y="149" width="395.2" height="12.5" fill="#f0f0f0"/><rect x="874.4" y="565.06" width="380.4" height="10.62" fill="#3399ff"/><rect x="1158.5" y="565.56" width="16.0" height="9.62" fill="#fff"/><rect x="1190.5" y="565.56" width="16.0" height="9.62" fill="#fff"/><rect x="1222.5" y="565.56" width="16.399999999999977" height="9.62" fill="#fff"/><rect x="859.6" y="161.0" width="395.2" height="1" fill="#858585"/><rect x="859.6" y="171.62" width="395.2" height="1" fill="#858585"/><rect x="859.6" y="182.24" width="395.2" height="1" fill="#858585"/><rect x="859.6" y="192.86" width="395.2" height="1" fill="#858585"/><rect x="859.6" y="203.48" width="395.2" height="1" fill="#858585"/><rect x="859.6" y="214.1" width="395.2" height="1" fill="#858585"/><rect x="859.6" y="224.72" width="395.2" height="1" fill="#858585"/><rect x="859.6" y="235.33999999999997" width="395.2" height="1" fill="#858585"/><rect x="859.6" y="245.95999999999998" width="395.2" height="1" fill="#858585"/><rect x="859.6" y="256.58" width="395.2" height="1" fill="#858585"/><rect x="859.6" y="267.2" width="395.2" height="1" fill="#858585"/><rect x="859.6" y="277.82" width="395.2" height="1" fill="#858585"/><rect x="859.6" y="288.44" width="395.2" height="1" fill="#858585"/><rect x="859.6" y="299.06" width="395.2" height="1" fill="#858585"/><rect x="859.6" y="309.67999999999995" width="395.2" height="1" fill="#858585"/><rect x="859.6" y="320.29999999999995" width="395.2" height="1" fill="#858585"/><rect x="859.6" y="330.91999999999996" width="395.2" height="1" fill="#858585"/><rect x="859.6" y="341.53999999999996" width="395.2" height="1" fill="#858585"/><rect x="859.6" y="352.15999999999997" width="395.2" height="1" fill="#858585"/><rect x="859.6" y="362.78" width="395.2" height="1" fill="#858585"/><rect x="859.6" y="373.4" width="395.2" height="1" fill="#858585"/><rect x="859.6" y="384.02" width="395.2" height="1" fill="#858585"/><rect x="859.6" y="394.64" width="395.2" height="1" fill="#858585"/><rect x="859.6" y="405.26" width="395.2" height="1" fill="#858585"/><rect x="859.6" y="415.88" width="395.2" height="1" fill="#858585"/><rect x="859.6" y="426.5" width="395.2" height="1" fill="#858585"/><rect x="859.6" y="437.12" width="395.2" height="1" fill="#858585"/><rect x="859.6" y="447.73999999999995" width="395.2" height="1" fill="#858585"/><rect x="859.6" y="458.35999999999996" width="395.2" height="1" fill="#858585"/><rect x="859.6" y="468.97999999999996" width="395.2" height="1" fill="#858585"/><rect x="859.6" y="479.59999999999997" width="395.2" height="1" fill="#858585"/><rect x="859.6" y="490.21999999999997" width="395.2" height="1" fill="#858585"/><rect x="859.6" y="500.84" width="395.2" height="1" fill="#858585"/><rect x="859.6" y="511.46" width="395.2" height="1" fill="#858585"/><rect x="859.6" y="522.0799999999999" width="395.2" height="1" fill="#858585"/><rect x="859.6" y="532.7" width="395.2" height="1" fill="#858585"/><rect x="859.6" y="543.3199999999999" width="395.2" height="1" fill="#858585"/><rect x="859.6" y="553.94" width="395.2" height="1" fill="#858585"/><rect x="859.6" y="564.56" width="395.2" height="1" fill="#858585"/><rect x="859.6" y="575.18" width="395.2" height="1" fill="#858585"/><rect x="859.6" y="585.8" width="395.2" height="1" fill="#858585"/><rect x="859.6" y="596.42" width="395.2" height="1" fill="#858585"/><rect x="859.6" y="607.04" width="395.2" height="1" fill="#858585"/><rect x="859.6" y="617.66" width="395.2" height="1" fill="#858585"/><rect x="859.6" y="628.28" width="395.2" height="1" fill="#858585"/><rect x="859.6" y="638.9" width="395.2" height="1" fill="#858585"/><rect x="859.6" y="649.52" width="395.2" height="1" fill="#858585"/><rect x="859.6" y="660.14" width="395.2" height="1" fill="#858585"/><rect x="859.6" y="670.76" width="395.2" height="1" fill="#858585"/><rect x="859.6" y="681.38" width="395.2" height="1" fill="#858585"/><rect x="859.6" y="692.0" width="395.2" height="1" fill="#858585"/><rect x="859.6" y="702.62" width="395.2" height="1" fill="#858585"/><rect x="859.6" y="713.24" width="395.2" height="1" fill="#858585"/><rect x="859.6" y="723.86" width="395.2" height="1" fill="#858585"/><rect x="873.9" y="161" width="1" height="573" fill="#858585"/><rect x="873.8" y="149" width="1.2" height="12.5" fill="#555"/><rect x="901.1" y="161" width="1" height="573" fill="#858585"/><rect x="901.0" y="149" width="1.2" height="12.5" fill="#555"/><rect x="954.2" y="161" width="1" height="573" fill="#858585"/><rect x="954.1" y="149" width="1.2" height="12.5" fill="#555"/><rect x="1007.1" y="161" width="1" height="573" fill="#858585"/><rect x="1007.0" y="149" width="1.2" height="12.5" fill="#555"/><rect x="1060.1" y="161" width="1" height="573" fill="#858585"/><rect x="1060.0" y="149" width="1.2" height="12.5" fill="#555"/><rect x="1126.0" y="161" width="1" height="573" fill="#858585"/><rect x="1125.9" y="149" width="1.2" height="12.5" fill="#555"/><rect x="1157.5" y="161" width="1" height="573" fill="#858585"/><rect x="1157.4" y="149" width="1.2" height="12.5" fill="#555"/><rect x="1189.5" y="161" width="1" height="573" fill="#858585"/><rect x="1189.4" y="149" width="1.2" height="12.5" fill="#555"/><rect x="1221.5" y="161" width="1" height="573" fill="#858585"/><rect x="1221.4" y="149" width="1.2" height="12.5" fill="#555"/><rect x="1254.3" y="161" width="1" height="573" fill="#858585"/><rect x="1254.2" y="149" width="1.2" height="12.5" fill="#555"/><rect x="859.6" y="160.9" width="395.2" height="1.2" fill="#555"/><rect x="859.6" y="161.5" width="14.3" height="572.5" fill="#ececec"/><rect x="859.6" y="161.0" width="14.3" height="1" fill="#a8a8a8"/><rect x="859.6" y="171.62" width="14.3" height="1" fill="#a8a8a8"/><rect x="859.6" y="182.24" width="14.3" height="1" fill="#a8a8a8"/><rect x="859.6" y="192.86" width="14.3" height="1" fill="#a8a8a8"/><rect x="859.6" y="203.48" width="14.3" height="1" fill="#a8a8a8"/><rect x="859.6" y="214.1" width="14.3" height="1" fill="#a8a8a8"/><rect x="859.6" y="224.72" width="14.3" height="1" fill="#a8a8a8"/><rect x="859.6" y="235.33999999999997" width="14.3" height="1" fill="#a8a8a8"/><rect x="859.6" y="245.95999999999998" width="14.3" height="1" fill="#a8a8a8"/><rect x="859.6" y="256.58" width="14.3" height="1" fill="#a8a8a8"/><rect x="859.6" y="267.2" width="14.3" height="1" fill="#a8a8a8"/><rect x="859.6" y="277.82" width="14.3" height="1" fill="#a8a8a8"/><rect x="859.6" y="288.44" width="14.3" height="1" fill="#a8a8a8"/><rect x="859.6" y="299.06" width="14.3" height="1" fill="#a8a8a8"/><rect x="859.6" y="309.67999999999995" width="14.3" height="1" fill="#a8a8a8"/><rect x="859.6" y="320.29999999999995" width="14.3" height="1" fill="#a8a8a8"/><rect x="859.6" y="330.91999999999996" width="14.3" height="1" fill="#a8a8a8"/><rect x="859.6" y="341.53999999999996" width="14.3" height="1" fill="#a8a8a8"/><rect x="859.6" y="352.15999999999997" width="14.3" height="1" fill="#a8a8a8"/><rect x="859.6" y="362.78" width="14.3" height="1" fill="#a8a8a8"/><rect x="859.6" y="373.4" width="14.3" height="1" fill="#a8a8a8"/><rect x="859.6" y="384.02" width="14.3" height="1" fill="#a8a8a8"/><rect x="859.6" y="394.64" width="14.3" height="1" fill="#a8a8a8"/><rect x="859.6" y="405.26" width="14.3" height="1" fill="#a8a8a8"/><rect x="859.6" y="415.88" width="14.3" height="1" fill="#a8a8a8"/><rect x="859.6" y="426.5" width="14.3" height="1" fill="#a8a8a8"/><rect x="859.6" y="437.12" width="14.3" height="1" fill="#a8a8a8"/><rect x="859.6" y="447.73999999999995" width="14.3" height="1" fill="#a8a8a8"/><rect x="859.6" y="458.35999999999996" width="14.3" height="1" fill="#a8a8a8"/><rect x="859.6" y="468.97999999999996" width="14.3" height="1" fill="#a8a8a8"/><rect x="859.6" y="479.59999999999997" width="14.3" height="1" fill="#a8a8a8"/><rect x="859.6" y="490.21999999999997" width="14.3" height="1" fill="#a8a8a8"/><rect x="859.6" y="500.84" width="14.3" height="1" fill="#a8a8a8"/><rect x="859.6" y="511.46" width="14.3" height="1" fill="#a8a8a8"/><rect x="859.6" y="522.0799999999999" width="14.3" height="1" fill="#a8a8a8"/><rect x="859.6" y="532.7" width="14.3" height="1" fill="#a8a8a8"/><rect x="859.6" y="543.3199999999999" width="14.3" height="1" fill="#a8a8a8"/><rect x="859.6" y="553.94" width="14.3" height="1" fill="#a8a8a8"/><rect x="859.6" y="564.56" width="14.3" height="1" fill="#a8a8a8"/><rect x="859.6" y="575.18" width="14.3" height="1" fill="#a8a8a8"/><rect x="859.6" y="585.8" width="14.3" height="1" fill="#a8a8a8"/><rect x="859.6" y="596.42" width="14.3" height="1" fill="#a8a8a8"/><rect x="859.6" y="607.04" width="14.3" height="1" fill="#a8a8a8"/><rect x="859.6" y="617.66" width="14.3" height="1" fill="#a8a8a8"/><rect x="859.6" y="628.28" width="14.3" height="1" fill="#a8a8a8"/><rect x="859.6" y="638.9" width="14.3" height="1" fill="#a8a8a8"/><rect x="859.6" y="649.52" width="14.3" height="1" fill="#a8a8a8"/><rect x="859.6" y="660.14" width="14.3" height="1" fill="#a8a8a8"/><rect x="859.6" y="670.76" width="14.3" height="1" fill="#a8a8a8"/><rect x="859.6" y="681.38" width="14.3" height="1" fill="#a8a8a8"/><rect x="859.6" y="692.0" width="14.3" height="1" fill="#a8a8a8"/><rect x="859.6" y="702.62" width="14.3" height="1" fill="#a8a8a8"/><rect x="859.6" y="713.24" width="14.3" height="1" fill="#a8a8a8"/><rect x="859.6" y="723.86" width="14.3" height="1" fill="#a8a8a8"/><rect x="873.6" y="149" width="1.2" height="585" fill="#333"/><rect x="859.1" y="149" width="0.8" height="585" fill="#888"/><text transform="translate(888.0 158.6) scale(0.9 1)" text-anchor="middle" font-family="Liberation Sans" font-weight="bold" font-size="8.6" fill="#111">Point</text><text transform="translate(928.2 158.6) scale(0.9 1)" text-anchor="middle" font-family="Liberation Sans" font-weight="bold" font-size="8.6" fill="#111">Northing</text><text transform="translate(981.2 158.6) scale(0.9 1)" text-anchor="middle" font-family="Liberation Sans" font-weight="bold" font-size="8.6" fill="#111">Easting</text><text transform="translate(1034.1 158.6) scale(0.9 1)" text-anchor="middle" font-family="Liberation Sans" font-weight="bold" font-size="8.6" fill="#111">Elevation</text><text transform="translate(1093.5 158.6) scale(0.9 1)" text-anchor="middle" font-family="Liberation Sans" font-weight="bold" font-size="8.6" fill="#111">Description</text><text transform="translate(1142.2 158.6) scale(0.9 1)" text-anchor="middle" font-family="Liberation Sans" font-weight="bold" font-size="8.6" fill="#111">Locked</text><text transform="translate(1174.0 158.6) scale(0.9 1)" text-anchor="middle" font-family="Liberation Sans" font-weight="bold" font-size="8.6" fill="#111">Audio</text><text transform="translate(1206.0 158.6) scale(0.9 1)" text-anchor="middle" font-family="Liberation Sans" font-weight="bold" font-size="8.6" fill="#111">Photo</text><text transform="translate(1238.4 158.6) scale(0.9 1)" text-anchor="middle" font-family="Liberation Sans" font-weight="bold" font-size="8.6" fill="#111">History</text><text transform="translate(876.3 169.80) scale(0.88 1)" font-family="Liberation Sans" font-size="8.8" fill="#111">1</text><text transform="translate(952.4 169.80) scale(0.86 1)" text-anchor="end" font-family="Liberation Sans" font-size="8.8" fill="#111">5496029.390</text><text transform="translate(1005.3 169.80) scale(0.86 1)" text-anchor="end" font-family="Liberation Sans" font-size="8.8" fill="#111">314260.814</text><text transform="translate(1058.3 169.80) scale(0.86 1)" text-anchor="end" font-family="Liberation Sans" font-size="8.8" fill="#111">561.185</text><rect x="1138.4" y="163.10" width="8" height="7.6" fill="#f4f4f4" stroke="#9a9a9a" stroke-width="0.9"/><text transform="translate(876.3 180.42) scale(0.88 1)" font-family="Liberation Sans" font-size="8.8" fill="#111">2</text><text transform="translate(952.4 180.42) scale(0.86 1)" text-anchor="end" font-family="Liberation Sans" font-size="8.8" fill="#111">5496006.616</text><text transform="translate(1005.3 180.42) scale(0.86 1)" text-anchor="end" font-family="Liberation Sans" font-size="8.8" fill="#111">314256.162</text><text transform="translate(1058.3 180.42) scale(0.86 1)" text-anchor="end" font-family="Liberation Sans" font-size="8.8" fill="#111">560.419</text><rect x="1138.4" y="173.72" width="8" height="7.6" fill="#f4f4f4" stroke="#9a9a9a" stroke-width="0.9"/><text transform="translate(876.3 191.04) scale(0.88 1)" font-family="Liberation Sans" font-size="8.8" fill="#111">3</text><text transform="translate(952.4 191.04) scale(0.86 1)" text-anchor="end" font-family="Liberation Sans" font-size="8.8" fill="#111">5496024.700</text><text transform="translate(1005.3 191.04) scale(0.86 1)" text-anchor="end" font-family="Liberation Sans" font-size="8.8" fill="#111">314256.620</text><text transform="translate(1058.3 191.04) scale(0.86 1)" text-anchor="end" font-family="Liberation Sans" font-size="8.8" fill="#111">560.825</text><rect x="1138.4" y="184.34" width="8" height="7.6" fill="#f4f4f4" stroke="#9a9a9a" stroke-width="0.9"/><text transform="translate(876.3 201.66) scale(0.88 1)" font-family="Liberation Sans" font-size="8.8" fill="#111">4</text><text transform="translate(952.4 201.66) scale(0.86 1)" text-anchor="end" font-family="Liberation Sans" font-size="8.8" fill="#111">5496050.450</text><text transform="translate(1005.3 201.66) scale(0.86 1)" text-anchor="end" font-family="Liberation Sans" font-size="8.8" fill="#111">314249.051</text><text transform="translate(1058.3 201.66) scale(0.86 1)" text-anchor="end" font-family="Liberation Sans" font-size="8.8" fill="#111">560.750</text><rect x="1138.4" y="194.96" width="8" height="7.6" fill="#f4f4f4" stroke="#9a9a9a" stroke-width="0.9"/><text transform="translate(876.3 212.28) scale(0.88 1)" font-family="Liberation Sans" font-size="8.8" fill="#111">5</text><text transform="translate(952.4 212.28) scale(0.86 1)" text-anchor="end" font-family="Liberation Sans" font-size="8.8" fill="#111">5495977.151</text><text transform="translate(1005.3 212.28) scale(0.86 1)" text-anchor="end" font-family="Liberation Sans" font-size="8.8" fill="#111">314246.672</text><text transform="translate(1058.3 212.28) scale(0.86 1)" text-anchor="end" font-family="Liberation Sans" font-size="8.8" fill="#111">560.295</text><rect x="1138.4" y="205.58" width="8" height="7.6" fill="#f4f4f4" stroke="#9a9a9a" stroke-width="0.9"/><text transform="translate(876.3 222.90) scale(0.88 1)" font-family="Liberation Sans" font-size="8.8" fill="#111">6</text><text transform="translate(952.4 222.90) scale(0.86 1)" text-anchor="end" font-family="Liberation Sans" font-size="8.8" fill="#111">5495993.520</text><text transform="translate(1005.3 222.90) scale(0.86 1)" text-anchor="end" font-family="Liberation Sans" font-size="8.8" fill="#111">314252.739</text><text transform="translate(1058.3 222.90) scale(0.86 1)" text-anchor="end" font-family="Liberation Sans" font-size="8.8" fill="#111">560.057</text><rect x="1138.4" y="216.20" width="8" height="7.6" fill="#f4f4f4" stroke="#9a9a9a" stroke-width="0.9"/><text transform="translate(876.3 233.52) scale(0.88 1)" font-family="Liberation Sans" font-size="8.8" fill="#111">7</text><text transform="translate(952.4 233.52) scale(0.86 1)" text-anchor="end" font-family="Liberation Sans" font-size="8.8" fill="#111">5496004.687</text><text transform="translate(1005.3 233.52) scale(0.86 1)" text-anchor="end" font-family="Liberation Sans" font-size="8.8" fill="#111">314239.563</text><text transform="translate(1058.3 233.52) scale(0.86 1)" text-anchor="end" font-family="Liberation Sans" font-size="8.8" fill="#111">559.205</text><rect x="1138.4" y="226.82" width="8" height="7.6" fill="#f4f4f4" stroke="#9a9a9a" stroke-width="0.9"/><text transform="translate(876.3 244.14) scale(0.88 1)" font-family="Liberation Sans" font-size="8.8" fill="#111">8</text><text transform="translate(952.4 244.14) scale(0.86 1)" text-anchor="end" font-family="Liberation Sans" font-size="8.8" fill="#111">5496016.258</text><text transform="translate(1005.3 244.14) scale(0.86 1)" text-anchor="end" font-family="Liberation Sans" font-size="8.8" fill="#111">314237.075</text><text transform="translate(1058.3 244.14) scale(0.86 1)" text-anchor="end" font-family="Liberation Sans" font-size="8.8" fill="#111">559.527</text><rect x="1138.4" y="237.44" width="8" height="7.6" fill="#f4f4f4" stroke="#9a9a9a" stroke-width="0.9"/><text transform="translate(876.3 254.76) scale(0.88 1)" font-family="Liberation Sans" font-size="8.8" fill="#111">9</text><text transform="translate(952.4 254.76) scale(0.86 1)" text-anchor="end" font-family="Liberation Sans" font-size="8.8" fill="#111">5495914.671</text><text transform="translate(1005.3 254.76) scale(0.86 1)" text-anchor="end" font-family="Liberation Sans" font-size="8.8" fill="#111">314209.439</text><text transform="translate(1058.3 254.76) scale(0.86 1)" text-anchor="end" font-family="Liberation Sans" font-size="8.8" fill="#111">558.594</text><rect x="1138.4" y="248.06" width="8" height="7.6" fill="#f4f4f4" stroke="#9a9a9a" stroke-width="0.9"/><text transform="translate(876.3 265.38) scale(0.88 1)" font-family="Liberation Sans" font-size="8.8" fill="#111">10</text><text transform="translate(952.4 265.38) scale(0.86 1)" text-anchor="end" font-family="Liberation Sans" font-size="8.8" fill="#111">5495980.499</text><text transform="translate(1005.3 265.38) scale(0.86 1)" text-anchor="end" font-family="Liberation Sans" font-size="8.8" fill="#111">314238.414</text><text transform="translate(1058.3 265.38) scale(0.86 1)" text-anchor="end" font-family="Liberation Sans" font-size="8.8" fill="#111">559.832</text><rect x="1138.4" y="258.68" width="8" height="7.6" fill="#f4f4f4" stroke="#9a9a9a" stroke-width="0.9"/><text transform="translate(876.3 276.00) scale(0.88 1)" font-family="Liberation Sans" font-size="8.8" fill="#111">11</text><text transform="translate(952.4 276.00) scale(0.86 1)" text-anchor="end" font-family="Liberation Sans" font-size="8.8" fill="#111">5495962.730</text><text transform="translate(1005.3 276.00) scale(0.86 1)" text-anchor="end" font-family="Liberation Sans" font-size="8.8" fill="#111">314232.571</text><text transform="translate(1058.3 276.00) scale(0.86 1)" text-anchor="end" font-family="Liberation Sans" font-size="8.8" fill="#111">559.657</text><rect x="1138.4" y="269.30" width="8" height="7.6" fill="#f4f4f4" stroke="#9a9a9a" stroke-width="0.9"/><text transform="translate(876.3 286.62) scale(0.88 1)" font-family="Liberation Sans" font-size="8.8" fill="#111">12</text><text transform="translate(952.4 286.62) scale(0.86 1)" text-anchor="end" font-family="Liberation Sans" font-size="8.8" fill="#111">5495932.172</text><text transform="translate(1005.3 286.62) scale(0.86 1)" text-anchor="end" font-family="Liberation Sans" font-size="8.8" fill="#111">314218.436</text><text transform="translate(1058.3 286.62) scale(0.86 1)" text-anchor="end" font-family="Liberation Sans" font-size="8.8" fill="#111">559.177</text><rect x="1138.4" y="279.92" width="8" height="7.6" fill="#f4f4f4" stroke="#9a9a9a" stroke-width="0.9"/><text transform="translate(876.3 297.24) scale(0.88 1)" font-family="Liberation Sans" font-size="8.8" fill="#111">13</text><text transform="translate(952.4 297.24) scale(0.86 1)" text-anchor="end" font-family="Liberation Sans" font-size="8.8" fill="#111">5495998.734</text><text transform="translate(1005.3 297.24) scale(0.86 1)" text-anchor="end" font-family="Liberation Sans" font-size="8.8" fill="#111">314242.314</text><text transform="translate(1058.3 297.24) scale(0.86 1)" text-anchor="end" font-family="Liberation Sans" font-size="8.8" fill="#111">559.622</text><rect x="1138.4" y="290.54" width="8" height="7.6" fill="#f4f4f4" stroke="#9a9a9a" stroke-width="0.9"/><text transform="translate(876.3 307.86) scale(0.88 1)" font-family="Liberation Sans" font-size="8.8" fill="#111">14</text><text transform="translate(952.4 307.86) scale(0.86 1)" text-anchor="end" font-family="Liberation Sans" font-size="8.8" fill="#111">5495946.873</text><text transform="translate(1005.3 307.86) scale(0.86 1)" text-anchor="end" font-family="Liberation Sans" font-size="8.8" fill="#111">314226.478</text><text transform="translate(1058.3 307.86) scale(0.86 1)" text-anchor="end" font-family="Liberation Sans" font-size="8.8" fill="#111">559.435</text><rect x="1138.4" y="301.16" width="8" height="7.6" fill="#f4f4f4" stroke="#9a9a9a" stroke-width="0.9"/><text transform="translate(876.3 318.48) scale(0.88 1)" font-family="Liberation Sans" font-size="8.8" fill="#111">15</text><text transform="translate(952.4 318.48) scale(0.86 1)" text-anchor="end" font-family="Liberation Sans" font-size="8.8" fill="#111">5495992.515</text><text transform="translate(1005.3 318.48) scale(0.86 1)" text-anchor="end" font-family="Liberation Sans" font-size="8.8" fill="#111">314228.999</text><text transform="translate(1058.3 318.48) scale(0.86 1)" text-anchor="end" font-family="Liberation Sans" font-size="8.8" fill="#111">557.931</text><rect x="1138.4" y="311.78" width="8" height="7.6" fill="#f4f4f4" stroke="#9a9a9a" stroke-width="0.9"/><text transform="translate(876.3 329.10) scale(0.88 1)" font-family="Liberation Sans" font-size="8.8" fill="#111">16</text><text transform="translate(952.4 329.10) scale(0.86 1)" text-anchor="end" font-family="Liberation Sans" font-size="8.8" fill="#111">5496001.063</text><text transform="translate(1005.3 329.10) scale(0.86 1)" text-anchor="end" font-family="Liberation Sans" font-size="8.8" fill="#111">314225.563</text><text transform="translate(1058.3 329.10) scale(0.86 1)" text-anchor="end" font-family="Liberation Sans" font-size="8.8" fill="#111">558.181</text><rect x="1138.4" y="322.40" width="8" height="7.6" fill="#f4f4f4" stroke="#9a9a9a" stroke-width="0.9"/><text transform="translate(876.3 339.72) scale(0.88 1)" font-family="Liberation Sans" font-size="8.8" fill="#111">17</text><text transform="translate(952.4 339.72) scale(0.86 1)" text-anchor="end" font-family="Liberation Sans" font-size="8.8" fill="#111">5495979.499</text><text transform="translate(1005.3 339.72) scale(0.86 1)" text-anchor="end" font-family="Liberation Sans" font-size="8.8" fill="#111">314217.426</text><text transform="translate(1058.3 339.72) scale(0.86 1)" text-anchor="end" font-family="Liberation Sans" font-size="8.8" fill="#111">556.361</text><rect x="1138.4" y="333.02" width="8" height="7.6" fill="#f4f4f4" stroke="#9a9a9a" stroke-width="0.9"/><text transform="translate(876.3 350.34) scale(0.88 1)" font-family="Liberation Sans" font-size="8.8" fill="#111">18</text><text transform="translate(952.4 350.34) scale(0.86 1)" text-anchor="end" font-family="Liberation Sans" font-size="8.8" fill="#111">5495988.414</text><text transform="translate(1005.3 350.34) scale(0.86 1)" text-anchor="end" font-family="Liberation Sans" font-size="8.8" fill="#111">314214.789</text><text transform="translate(1058.3 350.34) scale(0.86 1)" text-anchor="end" font-family="Liberation Sans" font-size="8.8" fill="#111">556.752</text><rect x="1138.4" y="343.64" width="8" height="7.6" fill="#f4f4f4" stroke="#9a9a9a" stroke-width="0.9"/><text transform="translate(876.3 360.96) scale(0.88 1)" font-family="Liberation Sans" font-size="8.8" fill="#111">19</text><text transform="translate(952.4 360.96) scale(0.86 1)" text-anchor="end" font-family="Liberation Sans" font-size="8.8" fill="#111">5495912.171</text><text transform="translate(1005.3 360.96) scale(0.86 1)" text-anchor="end" font-family="Liberation Sans" font-size="8.8" fill="#111">314218.809</text><text transform="translate(1058.3 360.96) scale(0.86 1)" text-anchor="end" font-family="Liberation Sans" font-size="8.8" fill="#111">559.195</text><rect x="1138.4" y="354.26" width="8" height="7.6" fill="#f4f4f4" stroke="#9a9a9a" stroke-width="0.9"/><text transform="translate(876.3 371.58) scale(0.88 1)" font-family="Liberation Sans" font-size="8.8" fill="#111">20</text><text transform="translate(952.4 371.58) scale(0.86 1)" text-anchor="end" font-family="Liberation Sans" font-size="8.8" fill="#111">5495960.742</text><text transform="translate(1005.3 371.58) scale(0.86 1)" text-anchor="end" font-family="Liberation Sans" font-size="8.8" fill="#111">314240.779</text><text transform="translate(1058.3 371.58) scale(0.86 1)" text-anchor="end" font-family="Liberation Sans" font-size="8.8" fill="#111">560.215</text><rect x="1138.4" y="364.88" width="8" height="7.6" fill="#f4f4f4" stroke="#9a9a9a" stroke-width="0.9"/><text transform="translate(876.3 382.20) scale(0.88 1)" font-family="Liberation Sans" font-size="8.8" fill="#111">21</text><text transform="translate(952.4 382.20) scale(0.86 1)" text-anchor="end" font-family="Liberation Sans" font-size="8.8" fill="#111">5495944.128</text><text transform="translate(1005.3 382.20) scale(0.86 1)" text-anchor="end" font-family="Liberation Sans" font-size="8.8" fill="#111">314233.484</text><text transform="translate(1058.3 382.20) scale(0.86 1)" text-anchor="end" font-family="Liberation Sans" font-size="8.8" fill="#111">560.032</text><rect x="1138.4" y="375.50" width="8" height="7.6" fill="#f4f4f4" stroke="#9a9a9a" stroke-width="0.9"/><text transform="translate(876.3 392.82) scale(0.88 1)" font-family="Liberation Sans" font-size="8.8" fill="#111">22</text><text transform="translate(952.4 392.82) scale(0.86 1)" text-anchor="end" font-family="Liberation Sans" font-size="8.8" fill="#111">5495823.694</text><text transform="translate(1005.3 392.82) scale(0.86 1)" text-anchor="end" font-family="Liberation Sans" font-size="8.8" fill="#111">314184.759</text><text transform="translate(1058.3 392.82) scale(0.86 1)" text-anchor="end" font-family="Liberation Sans" font-size="8.8" fill="#111">560.484</text><rect x="1138.4" y="386.12" width="8" height="7.6" fill="#f4f4f4" stroke="#9a9a9a" stroke-width="0.9"/><text transform="translate(876.3 403.44) scale(0.88 1)" font-family="Liberation Sans" font-size="8.8" fill="#111">23</text><text transform="translate(952.4 403.44) scale(0.86 1)" text-anchor="end" font-family="Liberation Sans" font-size="8.8" fill="#111">5495823.654</text><text transform="translate(1005.3 403.44) scale(0.86 1)" text-anchor="end" font-family="Liberation Sans" font-size="8.8" fill="#111">314184.767</text><text transform="translate(1058.3 403.44) scale(0.86 1)" text-anchor="end" font-family="Liberation Sans" font-size="8.8" fill="#111">560.482</text><rect x="1138.4" y="396.74" width="8" height="7.6" fill="#f4f4f4" stroke="#9a9a9a" stroke-width="0.9"/><text transform="translate(876.3 414.06) scale(0.88 1)" font-family="Liberation Sans" font-size="8.8" fill="#111">24</text><text transform="translate(952.4 414.06) scale(0.86 1)" text-anchor="end" font-family="Liberation Sans" font-size="8.8" fill="#111">5495897.821</text><text transform="translate(1005.3 414.06) scale(0.86 1)" text-anchor="end" font-family="Liberation Sans" font-size="8.8" fill="#111">314201.627</text><text transform="translate(1058.3 414.06) scale(0.86 1)" text-anchor="end" font-family="Liberation Sans" font-size="8.8" fill="#111">558.260</text><rect x="1138.4" y="407.36" width="8" height="7.6" fill="#f4f4f4" stroke="#9a9a9a" stroke-width="0.9"/><text transform="translate(876.3 424.68) scale(0.88 1)" font-family="Liberation Sans" font-size="8.8" fill="#111">25</text><text transform="translate(952.4 424.68) scale(0.86 1)" text-anchor="end" font-family="Liberation Sans" font-size="8.8" fill="#111">5495841.076</text><text transform="translate(1005.3 424.68) scale(0.86 1)" text-anchor="end" font-family="Liberation Sans" font-size="8.8" fill="#111">314188.919</text><text transform="translate(1058.3 424.68) scale(0.86 1)" text-anchor="end" font-family="Liberation Sans" font-size="8.8" fill="#111">559.847</text><rect x="1138.4" y="417.98" width="8" height="7.6" fill="#f4f4f4" stroke="#9a9a9a" stroke-width="0.9"/><text transform="translate(876.3 435.30) scale(0.88 1)" font-family="Liberation Sans" font-size="8.8" fill="#111">26</text><text transform="translate(952.4 435.30) scale(0.86 1)" text-anchor="end" font-family="Liberation Sans" font-size="8.8" fill="#111">5495859.205</text><text transform="translate(1005.3 435.30) scale(0.86 1)" text-anchor="end" font-family="Liberation Sans" font-size="8.8" fill="#111">314193.119</text><text transform="translate(1058.3 435.30) scale(0.86 1)" text-anchor="end" font-family="Liberation Sans" font-size="8.8" fill="#111">559.176</text><rect x="1138.4" y="428.60" width="8" height="7.6" fill="#f4f4f4" stroke="#9a9a9a" stroke-width="0.9"/><text transform="translate(876.3 445.92) scale(0.88 1)" font-family="Liberation Sans" font-size="8.8" fill="#111">27</text><text transform="translate(952.4 445.92) scale(0.86 1)" text-anchor="end" font-family="Liberation Sans" font-size="8.8" fill="#111">5495880.047</text><text transform="translate(1005.3 445.92) scale(0.86 1)" text-anchor="end" font-family="Liberation Sans" font-size="8.8" fill="#111">314197.487</text><text transform="translate(1058.3 445.92) scale(0.86 1)" text-anchor="end" font-family="Liberation Sans" font-size="8.8" fill="#111">558.527</text><rect x="1138.4" y="439.22" width="8" height="7.6" fill="#f4f4f4" stroke="#9a9a9a" stroke-width="0.9"/><text transform="translate(876.3 456.54) scale(0.88 1)" font-family="Liberation Sans" font-size="8.8" fill="#111">28</text><text transform="translate(952.4 456.54) scale(0.86 1)" text-anchor="end" font-family="Liberation Sans" font-size="8.8" fill="#111">5495895.509</text><text transform="translate(1005.3 456.54) scale(0.86 1)" text-anchor="end" font-family="Liberation Sans" font-size="8.8" fill="#111">314211.671</text><text transform="translate(1058.3 456.54) scale(0.86 1)" text-anchor="end" font-family="Liberation Sans" font-size="8.8" fill="#111">558.830</text><rect x="1138.4" y="449.84" width="8" height="7.6" fill="#f4f4f4" stroke="#9a9a9a" stroke-width="0.9"/><text transform="translate(876.3 467.16) scale(0.88 1)" font-family="Liberation Sans" font-size="8.8" fill="#111">29</text><text transform="translate(952.4 467.16) scale(0.86 1)" text-anchor="end" font-family="Liberation Sans" font-size="8.8" fill="#111">5495878.688</text><text transform="translate(1005.3 467.16) scale(0.86 1)" text-anchor="end" font-family="Liberation Sans" font-size="8.8" fill="#111">314207.683</text><text transform="translate(1058.3 467.16) scale(0.86 1)" text-anchor="end" font-family="Liberation Sans" font-size="8.8" fill="#111">557.864</text><rect x="1138.4" y="460.46" width="8" height="7.6" fill="#f4f4f4" stroke="#9a9a9a" stroke-width="0.9"/><text transform="translate(876.3 477.78) scale(0.88 1)" font-family="Liberation Sans" font-size="8.8" fill="#111">30</text><text transform="translate(952.4 477.78) scale(0.86 1)" text-anchor="end" font-family="Liberation Sans" font-size="8.8" fill="#111">5495876.986</text><text transform="translate(1005.3 477.78) scale(0.86 1)" text-anchor="end" font-family="Liberation Sans" font-size="8.8" fill="#111">314206.424</text><text transform="translate(1058.3 477.78) scale(0.86 1)" text-anchor="end" font-family="Liberation Sans" font-size="8.8" fill="#111">558.753</text><rect x="1138.4" y="471.08" width="8" height="7.6" fill="#f4f4f4" stroke="#9a9a9a" stroke-width="0.9"/><text transform="translate(876.3 488.40) scale(0.88 1)" font-family="Liberation Sans" font-size="8.8" fill="#111">31</text><text transform="translate(952.4 488.40) scale(0.86 1)" text-anchor="end" font-family="Liberation Sans" font-size="8.8" fill="#111">5495838.738</text><text transform="translate(1005.3 488.40) scale(0.86 1)" text-anchor="end" font-family="Liberation Sans" font-size="8.8" fill="#111">314200.937</text><text transform="translate(1058.3 488.40) scale(0.86 1)" text-anchor="end" font-family="Liberation Sans" font-size="8.8" fill="#111">559.908</text><rect x="1138.4" y="481.70" width="8" height="7.6" fill="#f4f4f4" stroke="#9a9a9a" stroke-width="0.9"/><text transform="translate(876.3 499.02) scale(0.88 1)" font-family="Liberation Sans" font-size="8.8" fill="#111">32</text><text transform="translate(952.4 499.02) scale(0.86 1)" text-anchor="end" font-family="Liberation Sans" font-size="8.8" fill="#111">5495871.714</text><text transform="translate(1005.3 499.02) scale(0.86 1)" text-anchor="end" font-family="Liberation Sans" font-size="8.8" fill="#111">314208.165</text><text transform="translate(1058.3 499.02) scale(0.86 1)" text-anchor="end" font-family="Liberation Sans" font-size="8.8" fill="#111">558.875</text><rect x="1138.4" y="492.32" width="8" height="7.6" fill="#f4f4f4" stroke="#9a9a9a" stroke-width="0.9"/><text transform="translate(876.3 509.64) scale(0.88 1)" font-family="Liberation Sans" font-size="8.8" fill="#111">33</text><text transform="translate(952.4 509.64) scale(0.86 1)" text-anchor="end" font-family="Liberation Sans" font-size="8.8" fill="#111">5495856.329</text><text transform="translate(1005.3 509.64) scale(0.86 1)" text-anchor="end" font-family="Liberation Sans" font-size="8.8" fill="#111">314204.586</text><text transform="translate(1058.3 509.64) scale(0.86 1)" text-anchor="end" font-family="Liberation Sans" font-size="8.8" fill="#111">559.390</text><rect x="1138.4" y="502.94" width="8" height="7.6" fill="#f4f4f4" stroke="#9a9a9a" stroke-width="0.9"/><text transform="translate(876.3 520.26) scale(0.88 1)" font-family="Liberation Sans" font-size="8.8" fill="#111">34</text><text transform="translate(952.4 520.26) scale(0.86 1)" text-anchor="end" font-family="Liberation Sans" font-size="8.8" fill="#111">5495821.077</text><text transform="translate(1005.3 520.26) scale(0.86 1)" text-anchor="end" font-family="Liberation Sans" font-size="8.8" fill="#111">314197.501</text><text transform="translate(1058.3 520.26) scale(0.86 1)" text-anchor="end" font-family="Liberation Sans" font-size="8.8" fill="#111">560.778</text><rect x="1138.4" y="513.56" width="8" height="7.6" fill="#f4f4f4" stroke="#9a9a9a" stroke-width="0.9"/><text transform="translate(876.3 530.88) scale(0.88 1)" font-family="Liberation Sans" font-size="8.8" fill="#111">35</text><text transform="translate(952.4 530.88) scale(0.86 1)" text-anchor="end" font-family="Liberation Sans" font-size="8.8" fill="#111">5495873.491</text><text transform="translate(1005.3 530.88) scale(0.86 1)" text-anchor="end" font-family="Liberation Sans" font-size="8.8" fill="#111">314205.862</text><text transform="translate(1058.3 530.88) scale(0.86 1)" text-anchor="end" font-family="Liberation Sans" font-size="8.8" fill="#111">558.874</text><rect x="1138.4" y="524.18" width="8" height="7.6" fill="#f4f4f4" stroke="#9a9a9a" stroke-width="0.9"/><text transform="translate(876.3 541.50) scale(0.88 1)" font-family="Liberation Sans" font-size="8.8" fill="#111">36</text><text transform="translate(952.4 541.50) scale(0.86 1)" text-anchor="end" font-family="Liberation Sans" font-size="8.8" fill="#111">5495421.082</text><text transform="translate(1005.3 541.50) scale(0.86 1)" text-anchor="end" font-family="Liberation Sans" font-size="8.8" fill="#111">314495.804</text><text transform="translate(1058.3 541.50) scale(0.86 1)" text-anchor="end" font-family="Liberation Sans" font-size="8.8" fill="#111">0.000</text><rect x="1138.4" y="534.80" width="8" height="7.6" fill="#f4f4f4" stroke="#9a9a9a" stroke-width="0.9"/><text transform="translate(876.3 552.12) scale(0.88 1)" font-family="Liberation Sans" font-size="8.8" fill="#111">37</text><text transform="translate(952.4 552.12) scale(0.86 1)" text-anchor="end" font-family="Liberation Sans" font-size="8.8" fill="#111">5495296.165</text><text transform="translate(1005.3 552.12) scale(0.86 1)" text-anchor="end" font-family="Liberation Sans" font-size="8.8" fill="#111">314550.546</text><text transform="translate(1058.3 552.12) scale(0.86 1)" text-anchor="end" font-family="Liberation Sans" font-size="8.8" fill="#111">0.000</text><rect x="1138.4" y="545.42" width="8" height="7.6" fill="#f4f4f4" stroke="#9a9a9a" stroke-width="0.9"/><text transform="translate(876.3 562.74) scale(0.88 1)" font-family="Liberation Sans" font-size="8.8" fill="#111">38</text><text transform="translate(952.4 562.74) scale(0.86 1)" text-anchor="end" font-family="Liberation Sans" font-size="8.8" fill="#111">5495246.245</text><text transform="translate(1005.3 562.74) scale(0.86 1)" text-anchor="end" font-family="Liberation Sans" font-size="8.8" fill="#111">314542.332</text><text transform="translate(1058.3 562.74) scale(0.86 1)" text-anchor="end" font-family="Liberation Sans" font-size="8.8" fill="#111">0.000</text><rect x="1138.4" y="556.04" width="8" height="7.6" fill="#f4f4f4" stroke="#9a9a9a" stroke-width="0.9"/><text transform="translate(876.3 573.36) scale(0.88 1)" font-family="Liberation Sans" font-size="8.8" fill="#fff">39</text><text transform="translate(952.4 573.36) scale(0.86 1)" text-anchor="end" font-family="Liberation Sans" font-size="8.8" fill="#fff">5495734.283</text><text transform="translate(1005.3 573.36) scale(0.86 1)" text-anchor="end" font-family="Liberation Sans" font-size="8.8" fill="#fff">314168.336</text><text transform="translate(1058.3 573.36) scale(0.86 1)" text-anchor="end" font-family="Liberation Sans" font-size="8.8" fill="#fff">563.581</text><rect x="1138.4" y="566.66" width="8" height="7.6" fill="#f4f4f4" stroke="#9a9a9a" stroke-width="0.9"/><text transform="translate(876.3 583.98) scale(0.88 1)" font-family="Liberation Sans" font-size="8.8" fill="#111">40</text><text transform="translate(952.4 583.98) scale(0.86 1)" text-anchor="end" font-family="Liberation Sans" font-size="8.8" fill="#111">5495806.136</text><text transform="translate(1005.3 583.98) scale(0.86 1)" text-anchor="end" font-family="Liberation Sans" font-size="8.8" fill="#111">314180.729</text><text transform="translate(1058.3 583.98) scale(0.86 1)" text-anchor="end" font-family="Liberation Sans" font-size="8.8" fill="#111">561.193</text><rect x="1138.4" y="577.28" width="8" height="7.6" fill="#f4f4f4" stroke="#9a9a9a" stroke-width="0.9"/><text transform="translate(876.3 594.60) scale(0.88 1)" font-family="Liberation Sans" font-size="8.8" fill="#111">41</text><text transform="translate(952.4 594.60) scale(0.86 1)" text-anchor="end" font-family="Liberation Sans" font-size="8.8" fill="#111">5495770.976</text><text transform="translate(1005.3 594.60) scale(0.86 1)" text-anchor="end" font-family="Liberation Sans" font-size="8.8" fill="#111">314174.865</text><text transform="translate(1058.3 594.60) scale(0.86 1)" text-anchor="end" font-family="Liberation Sans" font-size="8.8" fill="#111">562.442</text><rect x="1138.4" y="587.90" width="8" height="7.6" fill="#f4f4f4" stroke="#9a9a9a" stroke-width="0.9"/><text transform="translate(876.3 605.22) scale(0.88 1)" font-family="Liberation Sans" font-size="8.8" fill="#111">42</text><text transform="translate(952.4 605.22) scale(0.86 1)" text-anchor="end" font-family="Liberation Sans" font-size="8.8" fill="#111">5495788.593</text><text transform="translate(1005.3 605.22) scale(0.86 1)" text-anchor="end" font-family="Liberation Sans" font-size="8.8" fill="#111">314176.818</text><text transform="translate(1058.3 605.22) scale(0.86 1)" text-anchor="end" font-family="Liberation Sans" font-size="8.8" fill="#111">561.858</text><rect x="1138.4" y="598.52" width="8" height="7.6" fill="#f4f4f4" stroke="#9a9a9a" stroke-width="0.9"/><text transform="translate(876.3 615.84) scale(0.88 1)" font-family="Liberation Sans" font-size="8.8" fill="#111">43</text><text transform="translate(952.4 615.84) scale(0.86 1)" text-anchor="end" font-family="Liberation Sans" font-size="8.8" fill="#111">5495751.928</text><text transform="translate(1005.3 615.84) scale(0.86 1)" text-anchor="end" font-family="Liberation Sans" font-size="8.8" fill="#111">314171.584</text><text transform="translate(1058.3 615.84) scale(0.86 1)" text-anchor="end" font-family="Liberation Sans" font-size="8.8" fill="#111">563.238</text><rect x="1138.4" y="609.14" width="8" height="7.6" fill="#f4f4f4" stroke="#9a9a9a" stroke-width="0.9"/><text transform="translate(876.3 626.46) scale(0.88 1)" font-family="Liberation Sans" font-size="8.8" fill="#111">44</text><text transform="translate(952.4 626.46) scale(0.86 1)" text-anchor="end" font-family="Liberation Sans" font-size="8.8" fill="#111">5495749.114</text><text transform="translate(1005.3 626.46) scale(0.86 1)" text-anchor="end" font-family="Liberation Sans" font-size="8.8" fill="#111">314180.843</text><text transform="translate(1058.3 626.46) scale(0.86 1)" text-anchor="end" font-family="Liberation Sans" font-size="8.8" fill="#111">563.477</text><rect x="1138.4" y="619.76" width="8" height="7.6" fill="#f4f4f4" stroke="#9a9a9a" stroke-width="0.9"/><text transform="translate(876.3 637.08) scale(0.88 1)" font-family="Liberation Sans" font-size="8.8" fill="#111">45</text><text transform="translate(952.4 637.08) scale(0.86 1)" text-anchor="end" font-family="Liberation Sans" font-size="8.8" fill="#111">5495784.953</text><text transform="translate(1005.3 637.08) scale(0.86 1)" text-anchor="end" font-family="Liberation Sans" font-size="8.8" fill="#111">314192.224</text><text transform="translate(1058.3 637.08) scale(0.86 1)" text-anchor="end" font-family="Liberation Sans" font-size="8.8" fill="#111">562.184</text><rect x="1138.4" y="630.38" width="8" height="7.6" fill="#f4f4f4" stroke="#9a9a9a" stroke-width="0.9"/><text transform="translate(876.3 647.70) scale(0.88 1)" font-family="Liberation Sans" font-size="8.8" fill="#111">46</text><text transform="translate(952.4 647.70) scale(0.86 1)" text-anchor="end" font-family="Liberation Sans" font-size="8.8" fill="#111">5495804.278</text><text transform="translate(1005.3 647.70) scale(0.86 1)" text-anchor="end" font-family="Liberation Sans" font-size="8.8" fill="#111">314193.630</text><text transform="translate(1058.3 647.70) scale(0.86 1)" text-anchor="end" font-family="Liberation Sans" font-size="8.8" fill="#111">561.716</text><rect x="1138.4" y="641.00" width="8" height="7.6" fill="#f4f4f4" stroke="#9a9a9a" stroke-width="0.9"/><text transform="translate(876.3 658.32) scale(0.88 1)" font-family="Liberation Sans" font-size="8.8" fill="#111">47</text><text transform="translate(952.4 658.32) scale(0.86 1)" text-anchor="end" font-family="Liberation Sans" font-size="8.8" fill="#111">5495730.163</text><text transform="translate(1005.3 658.32) scale(0.86 1)" text-anchor="end" font-family="Liberation Sans" font-size="8.8" fill="#111">314175.587</text><text transform="translate(1058.3 658.32) scale(0.86 1)" text-anchor="end" font-family="Liberation Sans" font-size="8.8" fill="#111">563.825</text><rect x="1138.4" y="651.62" width="8" height="7.6" fill="#f4f4f4" stroke="#9a9a9a" stroke-width="0.9"/><text transform="translate(876.3 668.94) scale(0.88 1)" font-family="Liberation Sans" font-size="8.8" fill="#111">48</text><text transform="translate(952.4 668.94) scale(0.86 1)" text-anchor="end" font-family="Liberation Sans" font-size="8.8" fill="#111">5495767.943</text><text transform="translate(1005.3 668.94) scale(0.86 1)" text-anchor="end" font-family="Liberation Sans" font-size="8.8" fill="#111">314186.492</text><text transform="translate(1058.3 668.94) scale(0.86 1)" text-anchor="end" font-family="Liberation Sans" font-size="8.8" fill="#111">563.082</text><rect x="1138.4" y="662.24" width="8" height="7.6" fill="#f4f4f4" stroke="#9a9a9a" stroke-width="0.9"/><text transform="translate(876.3 679.56) scale(0.88 1)" font-family="Liberation Sans" font-size="8.8" fill="#111">49</text><text transform="translate(952.4 679.56) scale(0.86 1)" text-anchor="end" font-family="Liberation Sans" font-size="8.8" fill="#111">5495798.610</text><text transform="translate(1005.3 679.56) scale(0.86 1)" text-anchor="end" font-family="Liberation Sans" font-size="8.8" fill="#111">314194.741</text><text transform="translate(1058.3 679.56) scale(0.86 1)" text-anchor="end" font-family="Liberation Sans" font-size="8.8" fill="#111">561.820</text><rect x="1138.4" y="672.86" width="8" height="7.6" fill="#f4f4f4" stroke="#9a9a9a" stroke-width="0.9"/><text transform="translate(876.3 690.18) scale(0.88 1)" font-family="Liberation Sans" font-size="8.8" fill="#111">50</text><text transform="translate(952.4 690.18) scale(0.86 1)" text-anchor="end" font-family="Liberation Sans" font-size="8.8" fill="#111">5495730.286</text><text transform="translate(1005.3 690.18) scale(0.86 1)" text-anchor="end" font-family="Liberation Sans" font-size="8.8" fill="#111">314182.534</text><text transform="translate(1058.3 690.18) scale(0.86 1)" text-anchor="end" font-family="Liberation Sans" font-size="8.8" fill="#111">565.029</text><rect x="1138.4" y="683.48" width="8" height="7.6" fill="#f4f4f4" stroke="#9a9a9a" stroke-width="0.9"/><text transform="translate(876.3 700.80) scale(0.88 1)" font-family="Liberation Sans" font-size="8.8" fill="#111">51</text><text transform="translate(952.4 700.80) scale(0.86 1)" text-anchor="end" font-family="Liberation Sans" font-size="8.8" fill="#111">5495691.361</text><text transform="translate(1005.3 700.80) scale(0.86 1)" text-anchor="end" font-family="Liberation Sans" font-size="8.8" fill="#111">314160.765</text><text transform="translate(1058.3 700.80) scale(0.86 1)" text-anchor="end" font-family="Liberation Sans" font-size="8.8" fill="#111">564.539</text><rect x="1138.4" y="694.10" width="8" height="7.6" fill="#f4f4f4" stroke="#9a9a9a" stroke-width="0.9"/><text transform="translate(876.3 711.42) scale(0.88 1)" font-family="Liberation Sans" font-size="8.8" fill="#111">52</text><text transform="translate(952.4 711.42) scale(0.86 1)" text-anchor="end" font-family="Liberation Sans" font-size="8.8" fill="#111">5495716.639</text><text transform="translate(1005.3 711.42) scale(0.86 1)" text-anchor="end" font-family="Liberation Sans" font-size="8.8" fill="#111">314163.790</text><text transform="translate(1058.3 711.42) scale(0.86 1)" text-anchor="end" font-family="Liberation Sans" font-size="8.8" fill="#111">563.937</text><rect x="1138.4" y="704.72" width="8" height="7.6" fill="#f4f4f4" stroke="#9a9a9a" stroke-width="0.9"/><text transform="translate(876.3 722.04) scale(0.88 1)" font-family="Liberation Sans" font-size="8.8" fill="#111">53</text><text transform="translate(952.4 722.04) scale(0.86 1)" text-anchor="end" font-family="Liberation Sans" font-size="8.8" fill="#111">5495704.618</text><text transform="translate(1005.3 722.04) scale(0.86 1)" text-anchor="end" font-family="Liberation Sans" font-size="8.8" fill="#111">314160.370</text><text transform="translate(1058.3 722.04) scale(0.86 1)" text-anchor="end" font-family="Liberation Sans" font-size="8.8" fill="#111">564.120</text><rect x="1138.4" y="715.34" width="8" height="7.6" fill="#f4f4f4" stroke="#9a9a9a" stroke-width="0.9"/><text transform="translate(876.3 732.66) scale(0.88 1)" font-family="Liberation Sans" font-size="8.8" fill="#111">54</text><text transform="translate(952.4 732.66) scale(0.86 1)" text-anchor="end" font-family="Liberation Sans" font-size="8.8" fill="#111">5495696.740</text><text transform="translate(1005.3 732.66) scale(0.86 1)" text-anchor="end" font-family="Liberation Sans" font-size="8.8" fill="#111">314168.435</text><text transform="translate(1058.3 732.66) scale(0.86 1)" text-anchor="end" font-family="Liberation Sans" font-size="8.8" fill="#111">564.695</text><rect x="1138.4" y="725.96" width="8" height="7.6" fill="#f4f4f4" stroke="#9a9a9a" stroke-width="0.9"/><path d="M865.5,567.06 L870,570.36 L865.5,573.66 Z" fill="#000"/></svg>
<div class="a" style="left:1255px;top:149px;width:14px;height:585px;background:#ececec"></div>
<div class="a" style="left:1257px;top:161.5px;width:10px;height:41px;background:linear-gradient(90deg,#e0e0e0,#f8f8f8,#d8d8d8);border:1px solid #aaa;border-radius:2px"></div>
<div class="a" style="left:859px;top:734px;width:410px;height:10px;background:#ececec"></div>
<div class="a" style="left:870px;top:735px;width:335px;height:8px;background:linear-gradient(#f8f8f8,#d8d8d8);border:1px solid #aaa;border-radius:2px"></div>
<svg class="a" style="left:0;top:0" width="1280" height="775"><path d="M1259.5,158 L1264.5,158 L1262,155 Z" fill="#606060"/><path d="M1259.5,726 L1264.5,726 L1262,729 Z" fill="#606060"/><path d="M865.5,736.5 L865.5,741.5 L862.5,739 Z" fill="#606060"/><path d="M1248.5,736.5 L1248.5,741.5 L1251.5,739 Z" fill="#606060"/><path d="M1259.5,180 L1264.5,180 M1259.5,182 L1264.5,182 M1259.5,184 L1264.5,184" stroke="#888" stroke-width="0.6"/></svg>
<div class="a" style="left:854px;top:750px;width:421px;height:20px;background:#2d2d2d"></div>
<div class="a" style="left:862px;top:751.2px;width:413px;height:17.3px;background:#4a4a4a"></div>
<div class="t" style="left:865px;top:756px;font-size:8px;color:#e8e8e8">MODEL</div>
<svg class="a" style="left:0;top:0" width="1280" height="775"><rect x="894.5" y="752" width="1.3" height="17" fill="#353535"/><rect x="938.5" y="752" width="1.3" height="17" fill="#353535"/><rect x="1007.5" y="752" width="1.3" height="17" fill="#353535"/><rect x="1050.5" y="752" width="1.3" height="17" fill="#353535"/><rect x="1125" y="752" width="1.3" height="17" fill="#353535"/><rect x="1151.8" y="752" width="1.3" height="17" fill="#353535"/><rect x="1169.5" y="752" width="1.3" height="17" fill="#353535"/><rect x="1188.3" y="752" width="1.3" height="17" fill="#353535"/><rect x="1206.3" y="752" width="1.3" height="17" fill="#353535"/><rect x="1240.3" y="752" width="1.3" height="17" fill="#353535"/><g stroke="#aaa" stroke-width="0.7"><path d="M899.5,756 L899.5,765"/><path d="M899,756.5 L908,756.5"/><path d="M901.1,756 L901.1,765"/><path d="M899,758.1 L908,758.1"/><path d="M902.7,756 L902.7,765"/><path d="M899,759.7 L908,759.7"/><path d="M904.3,756 L904.3,765"/><path d="M899,761.3 L908,761.3"/><path d="M905.9,756 L905.9,765"/><path d="M899,762.9 L908,762.9"/><path d="M907.5,756 L907.5,765"/><path d="M899,764.5 L908,764.5"/></g><g fill="#777"><rect x="915.0" y="756.0" width="0.8" height="0.8"/><rect x="915.0" y="757.8" width="0.8" height="0.8"/><rect x="915.0" y="759.6" width="0.8" height="0.8"/><rect x="915.0" y="761.4" width="0.8" height="0.8"/><rect x="915.0" y="763.2" width="0.8" height="0.8"/><rect x="915.0" y="765.0" width="0.8" height="0.8"/><rect x="916.8" y="756.0" width="0.8" height="0.8"/><rect x="916.8" y="757.8" width="0.8" height="0.8"/><rect x="916.8" y="759.6" width="0.8" height="0.8"/><rect x="916.8" y="761.4" width="0.8" height="0.8"/><rect x="916.8" y="763.2" width="0.8" height="0.8"/><rect x="916.8" y="765.0" width="0.8" height="0.8"/><rect x="918.6" y="756.0" width="0.8" height="0.8"/><rect x="918.6" y="757.8" width="0.8" height="0.8"/><rect x="918.6" y="759.6" width="0.8" height="0.8"/><rect x="918.6" y="761.4" width="0.8" height="0.8"/><rect x="918.6" y="763.2" width="0.8" height="0.8"/><rect x="918.6" y="765.0" width="0.8" height="0.8"/><rect x="920.4" y="756.0" width="0.8" height="0.8"/><rect x="920.4" y="757.8" width="0.8" height="0.8"/><rect x="920.4" y="759.6" width="0.8" height="0.8"/><rect x="920.4" y="761.4" width="0.8" height="0.8"/><rect x="920.4" y="763.2" width="0.8" height="0.8"/><rect x="920.4" y="765.0" width="0.8" height="0.8"/><rect x="922.2" y="756.0" width="0.8" height="0.8"/><rect x="922.2" y="757.8" width="0.8" height="0.8"/><rect x="922.2" y="759.6" width="0.8" height="0.8"/><rect x="922.2" y="761.4" width="0.8" height="0.8"/><rect x="922.2" y="763.2" width="0.8" height="0.8"/><rect x="922.2" y="765.0" width="0.8" height="0.8"/><rect x="924.0" y="756.0" width="0.8" height="0.8"/><rect x="924.0" y="757.8" width="0.8" height="0.8"/><rect x="924.0" y="759.6" width="0.8" height="0.8"/><rect x="924.0" y="761.4" width="0.8" height="0.8"/><rect x="924.0" y="763.2" width="0.8" height="0.8"/><rect x="924.0" y="765.0" width="0.8" height="0.8"/></g><path d="M930.5,759.5 L935.5,759.5 L933,762.3 Z" fill="#ddd"/><path d="M944.5,755 L944.5,765 L952,765 M946.5,761 L946.5,763 L949,763" fill="none" stroke="#bbb" stroke-width="1"/><circle cx="964" cy="760.5" r="4.6" fill="none" stroke="#2a86f0" stroke-width="1.5"/><path d="M964,760.5 L968,758" stroke="#2a86f0" stroke-width="1.3"/><path d="M973.5,759.5 L978.5,759.5 L976,762.3 Z" fill="#ddd"/><path d="M986,756 L995,765.5 M989.5,755 L989.5,766" stroke="#999" stroke-width="1"/><path d="M1000.0,759.5 L1005.0,759.5 L1002.5,762.3 Z" fill="#ddd"/><path d="M1011,765 L1021,765 M1011,765 L1019,756" stroke="#2a86f0" stroke-width="1.5" fill="none"/><rect x="1028" y="756" width="10" height="9" fill="none" stroke="#ccc" stroke-width="1"/><rect x="1027" y="755" width="2.5" height="2.5" fill="#10c010"/><path d="M1042.5,759.5 L1047.5,759.5 L1045,762.3 Z" fill="#ddd"/><path d="M1055,766 L1060,760 L1065,766 M1060,760 L1060,755 M1056,757 L1064,757" stroke="#2a86f0" stroke-width="1.8" fill="none"/><circle cx="1063" cy="756" r="2" fill="none" stroke="#2a86f0" stroke-width="1"/><path d="M1071,766 L1076,760 L1081,766 M1076,760 L1076,755" stroke="#aaa" stroke-width="1.8" fill="none"/><path d="M1087,766 L1092,760 L1097,766 M1092,760 L1092,755" stroke="#aaa" stroke-width="1.8" fill="none"/><text x="1103.5" y="764" font-family="Liberation Sans" font-size="8.5" font-weight="bold" fill="#cfc8b0">1:1</text><path d="M1117.0,759.5 L1122.0,759.5 L1119.5,762.3 Z" fill="#ddd"/><g transform="translate(1134 760.5)"><circle r="3.6" fill="#aaa"/><circle r="1.3" fill="#4a4a4a"/><rect x="-1" y="-5.2" width="2" height="2.2" fill="#aaa" transform="rotate(0)"/><rect x="-1" y="-5.2" width="2" height="2.2" fill="#aaa" transform="rotate(45)"/><rect x="-1" y="-5.2" width="2" height="2.2" fill="#aaa" transform="rotate(90)"/><rect x="-1" y="-5.2" width="2" height="2.2" fill="#aaa" transform="rotate(135)"/><rect x="-1" y="-5.2" width="2" height="2.2" fill="#aaa" transform="rotate(180)"/><rect x="-1" y="-5.2" width="2" height="2.2" fill="#aaa" transform="rotate(225)"/><rect x="-1" y="-5.2" width="2" height="2.2" fill="#aaa" transform="rotate(270)"/><rect x="-1" y="-5.2" width="2" height="2.2" fill="#aaa" transform="rotate(315)"/></g><path d="M1144.5,759.5 L1149.5,759.5 L1147,762.3 Z" fill="#ddd"/><path d="M1155,760.5 L1167,760.5 M1161,754.5 L1161,766.5" stroke="#ccc" stroke-width="1.5"/><rect x="1174" y="755" width="5" height="5" fill="none" stroke="#bbb" stroke-width="0.9"/><circle cx="1183" cy="759" r="2.5" fill="none" stroke="#bbb" stroke-width="0.9"/><path d="M1176,766 L1179,761.5 L1182,766 Z" fill="none" stroke="#bbb" stroke-width="0.9"/><circle cx="1197" cy="760.5" r="6" fill="#1a60c8" stroke="#0a3a90" stroke-width="1"/><path d="M1195,762 L1199,759" stroke="#cde" stroke-width="0.8"/><rect x="1209" y="756" width="9" height="7" fill="#d4b040"/><circle cx="1212" cy="756" r="2" fill="#cde"/><path d="M1215,766 L1218.5,759.5 L1222,766 Z" fill="#f0c000"/><rect x="1223" y="755" width="12" height="10" fill="#f0f0f0" stroke="#888" stroke-width="0.5"/><path d="M1224,764 Q1229,750 1234,764" fill="none" stroke="#222" stroke-width="1"/><path d="M1231,767 L1234,762 L1237,767 Z" fill="#e05010"/><rect x="1243.5" y="755.5" width="11" height="9" fill="none" stroke="#bbb" stroke-width="1"/><path d="M1246,762 L1252,758" stroke="#bbb" stroke-width="1"/><path d="M1260,756.5 L1271,756.5 M1260,760.5 L1271,760.5 M1260,764.5 L1271,764.5" stroke="#ccc" stroke-width="1.3"/></svg>
</body></html>
